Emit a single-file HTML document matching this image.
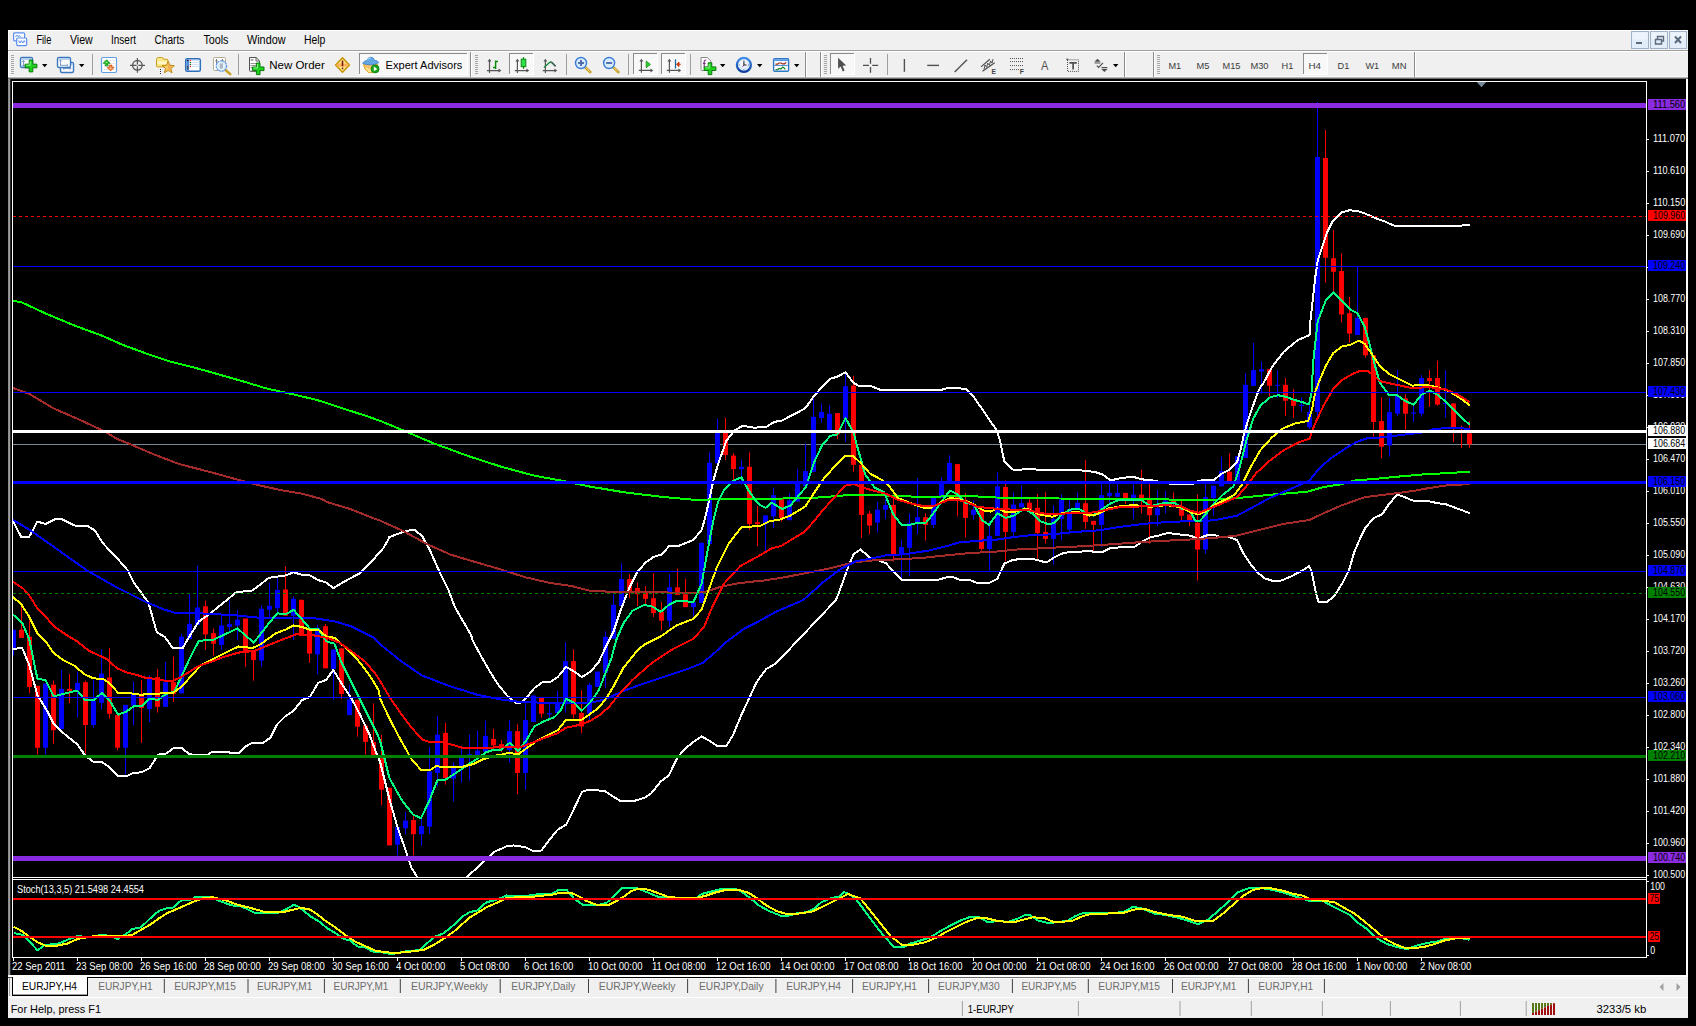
<!DOCTYPE html>
<html lang="en"><head><meta charset="utf-8"><title>EURJPY,H4</title>
<style>html,body{margin:0;padding:0;background:#000;overflow:hidden}svg{display:block}</style>
</head><body>
<svg width="1696" height="1026" viewBox="0 0 1696 1026" font-family='"Liberation Sans", sans-serif'>
<defs>
<clipPath id="cm"><rect x="13" y="82" width="1633" height="795"/></clipPath>
<clipPath id="cs"><rect x="13" y="880" width="1633" height="77"/></clipPath>
</defs>
<rect x="0" y="0" width="1696" height="1026" fill="#000"/>
<g clip-path="url(#cm)">
<rect x="13" y="444" width="1633" height="1" fill="#778899"/>
<rect x="13" y="629.7" width="1" height="25.7" fill="#0000ff"/>
<rect x="11" y="629.7" width="5" height="18.7" fill="#0000ff"/>
<rect x="21" y="605.1" width="1" height="32.8" fill="#ff0000"/>
<rect x="19" y="629.7" width="5" height="8.2" fill="#ff0000"/>
<rect x="29" y="620.4" width="1" height="72.5" fill="#ff0000"/>
<rect x="27" y="636.7" width="5" height="50.3" fill="#ff0000"/>
<rect x="37" y="685.8" width="1" height="68.9" fill="#ff0000"/>
<rect x="35" y="685.8" width="5" height="61.9" fill="#ff0000"/>
<rect x="45" y="683.5" width="1" height="71.2" fill="#0000ff"/>
<rect x="43" y="683.5" width="5" height="64.2" fill="#0000ff"/>
<rect x="53" y="680.6" width="1" height="63.1" fill="#ff0000"/>
<rect x="51" y="684.6" width="5" height="45.6" fill="#ff0000"/>
<rect x="61" y="669.8" width="1" height="59.2" fill="#0000ff"/>
<rect x="59" y="688.8" width="5" height="40.2" fill="#0000ff"/>
<rect x="69" y="674" width="1" height="29.3" fill="#ff0000"/>
<rect x="67" y="688.8" width="5" height="2.3" fill="#ff0000"/>
<rect x="77" y="671.7" width="1" height="45.6" fill="#0000ff"/>
<rect x="75" y="682.9" width="5" height="7.5" fill="#0000ff"/>
<rect x="85" y="680.6" width="1" height="73" fill="#ff0000"/>
<rect x="83" y="682.2" width="5" height="42.8" fill="#ff0000"/>
<rect x="93" y="679.9" width="1" height="47.9" fill="#0000ff"/>
<rect x="91" y="700.9" width="5" height="24.1" fill="#0000ff"/>
<rect x="101" y="649.6" width="1" height="59.5" fill="#0000ff"/>
<rect x="99" y="673.6" width="5" height="29.2" fill="#0000ff"/>
<rect x="109" y="648" width="1" height="70.5" fill="#ff0000"/>
<rect x="107" y="677.5" width="5" height="36.3" fill="#ff0000"/>
<rect x="117" y="715" width="1" height="35.1" fill="#ff0000"/>
<rect x="115" y="715" width="5" height="32.7" fill="#ff0000"/>
<rect x="125" y="704.9" width="1" height="69.7" fill="#0000ff"/>
<rect x="123" y="704.9" width="5" height="42.8" fill="#0000ff"/>
<rect x="133" y="681.5" width="1" height="43.5" fill="#0000ff"/>
<rect x="131" y="693.9" width="5" height="11.7" fill="#0000ff"/>
<rect x="141" y="679.9" width="1" height="63.1" fill="#ff0000"/>
<rect x="139" y="693.9" width="5" height="14.1" fill="#ff0000"/>
<rect x="149" y="675.2" width="1" height="46.8" fill="#0000ff"/>
<rect x="147" y="678.7" width="5" height="30.4" fill="#0000ff"/>
<rect x="157" y="668.9" width="1" height="43.7" fill="#ff0000"/>
<rect x="155" y="677.1" width="5" height="29.7" fill="#ff0000"/>
<rect x="165" y="661.9" width="1" height="44.9" fill="#0000ff"/>
<rect x="163" y="682.2" width="5" height="24.6" fill="#0000ff"/>
<rect x="173" y="656.6" width="1" height="45.5" fill="#ff0000"/>
<rect x="171" y="682.2" width="5" height="11.7" fill="#ff0000"/>
<rect x="181" y="633.9" width="1" height="59.4" fill="#0000ff"/>
<rect x="179" y="636.7" width="5" height="56.6" fill="#0000ff"/>
<rect x="189" y="593.5" width="1" height="45.6" fill="#0000ff"/>
<rect x="187" y="623.9" width="5" height="15.2" fill="#0000ff"/>
<rect x="197" y="565.4" width="1" height="59.6" fill="#0000ff"/>
<rect x="195" y="607.5" width="5" height="17.5" fill="#0000ff"/>
<rect x="205" y="600.5" width="1" height="49.1" fill="#ff0000"/>
<rect x="203" y="606.3" width="5" height="28.1" fill="#ff0000"/>
<rect x="213" y="628.5" width="1" height="26.9" fill="#ff0000"/>
<rect x="211" y="633.2" width="5" height="10.5" fill="#ff0000"/>
<rect x="221" y="614.5" width="1" height="35.1" fill="#0000ff"/>
<rect x="219" y="625.5" width="5" height="19.4" fill="#0000ff"/>
<rect x="229" y="600.5" width="1" height="31.5" fill="#0000ff"/>
<rect x="227" y="623.9" width="5" height="3" fill="#0000ff"/>
<rect x="237" y="609.8" width="1" height="30.4" fill="#0000ff"/>
<rect x="235" y="619.6" width="5" height="5.9" fill="#0000ff"/>
<rect x="245" y="618.5" width="1" height="48.6" fill="#ff0000"/>
<rect x="243" y="618.5" width="5" height="33.4" fill="#ff0000"/>
<rect x="253" y="651.9" width="1" height="28.8" fill="#ff0000"/>
<rect x="251" y="651.9" width="5" height="8.2" fill="#ff0000"/>
<rect x="261" y="605.1" width="1" height="62" fill="#0000ff"/>
<rect x="259" y="608.7" width="5" height="51.9" fill="#0000ff"/>
<rect x="269" y="582.9" width="1" height="35.1" fill="#0000ff"/>
<rect x="267" y="605.8" width="5" height="4" fill="#0000ff"/>
<rect x="277" y="577.8" width="1" height="35.5" fill="#0000ff"/>
<rect x="275" y="589.9" width="5" height="18.3" fill="#0000ff"/>
<rect x="285" y="566.5" width="1" height="49.2" fill="#ff0000"/>
<rect x="283" y="589.5" width="5" height="26.2" fill="#ff0000"/>
<rect x="293" y="596.3" width="1" height="43.9" fill="#0000ff"/>
<rect x="291" y="598.8" width="5" height="16.9" fill="#0000ff"/>
<rect x="301" y="599.8" width="1" height="34.6" fill="#ff0000"/>
<rect x="299" y="599.8" width="5" height="34.6" fill="#ff0000"/>
<rect x="309" y="629.7" width="1" height="33.2" fill="#ff0000"/>
<rect x="307" y="629.7" width="5" height="23.9" fill="#ff0000"/>
<rect x="317" y="624.6" width="1" height="50" fill="#0000ff"/>
<rect x="315" y="627.8" width="5" height="26.5" fill="#0000ff"/>
<rect x="325" y="623.9" width="1" height="44.4" fill="#ff0000"/>
<rect x="323" y="626.2" width="5" height="42.1" fill="#ff0000"/>
<rect x="333" y="649.6" width="1" height="50.3" fill="#0000ff"/>
<rect x="331" y="649.6" width="5" height="19.4" fill="#0000ff"/>
<rect x="341" y="648.4" width="1" height="50.3" fill="#ff0000"/>
<rect x="339" y="648.4" width="5" height="45.6" fill="#ff0000"/>
<rect x="349" y="684.7" width="1" height="30.4" fill="#0000ff"/>
<rect x="347" y="699.4" width="5" height="15.7" fill="#0000ff"/>
<rect x="357" y="699.8" width="1" height="36.9" fill="#ff0000"/>
<rect x="355" y="699.8" width="5" height="26.9" fill="#ff0000"/>
<rect x="365" y="725.5" width="1" height="29.2" fill="#ff0000"/>
<rect x="363" y="725.5" width="5" height="16.4" fill="#ff0000"/>
<rect x="373" y="703.3" width="1" height="53.8" fill="#ff0000"/>
<rect x="371" y="741.9" width="5" height="15.2" fill="#ff0000"/>
<rect x="381" y="734.7" width="1" height="70.2" fill="#ff0000"/>
<rect x="379" y="757" width="5" height="32.7" fill="#ff0000"/>
<rect x="389" y="787.8" width="1" height="57.6" fill="#ff0000"/>
<rect x="387" y="787.8" width="5" height="57.6" fill="#ff0000"/>
<rect x="397" y="827.1" width="1" height="28.1" fill="#0000ff"/>
<rect x="395" y="827.1" width="5" height="17.6" fill="#0000ff"/>
<rect x="405" y="811.9" width="1" height="22.3" fill="#0000ff"/>
<rect x="403" y="820.6" width="5" height="7.7" fill="#0000ff"/>
<rect x="413" y="815.4" width="1" height="39.8" fill="#ff0000"/>
<rect x="411" y="820.1" width="5" height="14.1" fill="#ff0000"/>
<rect x="421" y="818.9" width="1" height="26.9" fill="#0000ff"/>
<rect x="419" y="826" width="5" height="8.2" fill="#0000ff"/>
<rect x="429" y="747.1" width="1" height="86.6" fill="#0000ff"/>
<rect x="427" y="771.5" width="5" height="55.2" fill="#0000ff"/>
<rect x="437" y="716" width="1" height="70.2" fill="#0000ff"/>
<rect x="435" y="734.7" width="5" height="38.2" fill="#0000ff"/>
<rect x="445" y="723" width="1" height="61.6" fill="#ff0000"/>
<rect x="443" y="732.9" width="5" height="45.1" fill="#ff0000"/>
<rect x="453" y="762.1" width="1" height="39.3" fill="#0000ff"/>
<rect x="451" y="765.6" width="5" height="12.9" fill="#0000ff"/>
<rect x="461" y="748.1" width="1" height="34.6" fill="#0000ff"/>
<rect x="459" y="757" width="5" height="9.3" fill="#0000ff"/>
<rect x="469" y="734.7" width="1" height="45.7" fill="#0000ff"/>
<rect x="467" y="754.2" width="5" height="3.9" fill="#0000ff"/>
<rect x="477" y="730.8" width="1" height="25" fill="#0000ff"/>
<rect x="475" y="750.6" width="5" height="5.2" fill="#0000ff"/>
<rect x="485" y="720.7" width="1" height="31.1" fill="#0000ff"/>
<rect x="483" y="735.9" width="5" height="15.9" fill="#0000ff"/>
<rect x="493" y="728.9" width="1" height="18.7" fill="#ff0000"/>
<rect x="491" y="738.9" width="5" height="6.4" fill="#ff0000"/>
<rect x="501" y="740.1" width="1" height="12.2" fill="#ff0000"/>
<rect x="499" y="744.1" width="5" height="4.7" fill="#ff0000"/>
<rect x="509" y="720" width="1" height="42.8" fill="#0000ff"/>
<rect x="507" y="731.2" width="5" height="18.7" fill="#0000ff"/>
<rect x="517" y="724.2" width="1" height="70.2" fill="#ff0000"/>
<rect x="515" y="731.2" width="5" height="41.7" fill="#ff0000"/>
<rect x="525" y="703.2" width="1" height="86.5" fill="#0000ff"/>
<rect x="523" y="720" width="5" height="52.9" fill="#0000ff"/>
<rect x="533" y="695" width="1" height="26.9" fill="#0000ff"/>
<rect x="531" y="695.7" width="5" height="26.2" fill="#0000ff"/>
<rect x="541" y="698" width="1" height="19.7" fill="#ff0000"/>
<rect x="539" y="698" width="5" height="15.7" fill="#ff0000"/>
<rect x="549" y="702" width="1" height="16.4" fill="#0000ff"/>
<rect x="547" y="713.2" width="5" height="1.2" fill="#0000ff"/>
<rect x="557" y="691" width="1" height="22" fill="#0000ff"/>
<rect x="555" y="703.2" width="5" height="9.8" fill="#0000ff"/>
<rect x="565" y="642.2" width="1" height="70.3" fill="#0000ff"/>
<rect x="563" y="661.1" width="5" height="43.2" fill="#0000ff"/>
<rect x="573" y="649.2" width="1" height="69.2" fill="#ff0000"/>
<rect x="571" y="661.1" width="5" height="53.3" fill="#ff0000"/>
<rect x="581" y="690.3" width="1" height="42.6" fill="#ff0000"/>
<rect x="579" y="713" width="5" height="13.5" fill="#ff0000"/>
<rect x="589" y="682.6" width="1" height="38.1" fill="#0000ff"/>
<rect x="587" y="684.9" width="5" height="28.8" fill="#0000ff"/>
<rect x="597" y="671.6" width="1" height="15.2" fill="#0000ff"/>
<rect x="595" y="671.6" width="5" height="15.2" fill="#0000ff"/>
<rect x="605" y="631.2" width="1" height="56.8" fill="#0000ff"/>
<rect x="603" y="636.8" width="5" height="35.9" fill="#0000ff"/>
<rect x="613" y="594.3" width="1" height="44.4" fill="#0000ff"/>
<rect x="611" y="604.8" width="5" height="33.9" fill="#0000ff"/>
<rect x="621" y="563.2" width="1" height="42.8" fill="#0000ff"/>
<rect x="619" y="579.1" width="5" height="26.9" fill="#0000ff"/>
<rect x="629" y="574.4" width="1" height="23.4" fill="#ff0000"/>
<rect x="627" y="579.1" width="5" height="14" fill="#ff0000"/>
<rect x="637" y="582.6" width="1" height="23.4" fill="#ff0000"/>
<rect x="635" y="588" width="5" height="6.3" fill="#ff0000"/>
<rect x="645" y="586.1" width="1" height="18.7" fill="#ff0000"/>
<rect x="643" y="592.6" width="5" height="6.3" fill="#ff0000"/>
<rect x="653" y="573.2" width="1" height="43.8" fill="#ff0000"/>
<rect x="651" y="598.2" width="5" height="14.8" fill="#ff0000"/>
<rect x="661" y="602" width="1" height="28.5" fill="#ff0000"/>
<rect x="659" y="611.8" width="5" height="8.9" fill="#ff0000"/>
<rect x="669" y="574.4" width="1" height="52.6" fill="#0000ff"/>
<rect x="667" y="587.3" width="5" height="33.4" fill="#0000ff"/>
<rect x="677" y="568.5" width="1" height="26.5" fill="#ff0000"/>
<rect x="675" y="587.3" width="5" height="7.7" fill="#ff0000"/>
<rect x="685" y="579.1" width="1" height="28" fill="#ff0000"/>
<rect x="683" y="594.3" width="5" height="12.8" fill="#ff0000"/>
<rect x="693" y="602.5" width="1" height="14" fill="#0000ff"/>
<rect x="691" y="602.5" width="5" height="4.6" fill="#0000ff"/>
<rect x="701" y="542.8" width="1" height="60.1" fill="#0000ff"/>
<rect x="699" y="542.8" width="5" height="60.1" fill="#0000ff"/>
<rect x="709" y="452.3" width="1" height="91.7" fill="#0000ff"/>
<rect x="707" y="462.8" width="5" height="81.2" fill="#0000ff"/>
<rect x="717" y="418.8" width="1" height="44.5" fill="#0000ff"/>
<rect x="715" y="432.9" width="5" height="30.4" fill="#0000ff"/>
<rect x="725" y="417.7" width="1" height="42.1" fill="#ff0000"/>
<rect x="723" y="432.9" width="5" height="22.2" fill="#ff0000"/>
<rect x="733" y="453.2" width="1" height="27.6" fill="#ff0000"/>
<rect x="731" y="455.6" width="5" height="13.5" fill="#ff0000"/>
<rect x="741" y="459.8" width="1" height="24.5" fill="#0000ff"/>
<rect x="739" y="466.8" width="5" height="2.3" fill="#0000ff"/>
<rect x="749" y="452.3" width="1" height="77.6" fill="#ff0000"/>
<rect x="747" y="466.8" width="5" height="57.3" fill="#ff0000"/>
<rect x="757" y="506.1" width="1" height="40.2" fill="#ff0000"/>
<rect x="755" y="522.2" width="5" height="1.9" fill="#ff0000"/>
<rect x="765" y="515.4" width="1" height="36.8" fill="#0000ff"/>
<rect x="763" y="515.4" width="5" height="8.7" fill="#0000ff"/>
<rect x="773" y="487.5" width="1" height="40.5" fill="#0000ff"/>
<rect x="771" y="495.2" width="5" height="21.1" fill="#0000ff"/>
<rect x="781" y="499.2" width="1" height="22.2" fill="#ff0000"/>
<rect x="779" y="499.2" width="5" height="18.7" fill="#ff0000"/>
<rect x="789" y="492.9" width="1" height="27.3" fill="#0000ff"/>
<rect x="787" y="500.4" width="5" height="19.8" fill="#0000ff"/>
<rect x="797" y="468.8" width="1" height="32.7" fill="#0000ff"/>
<rect x="795" y="482.8" width="5" height="18.7" fill="#0000ff"/>
<rect x="805" y="443.7" width="1" height="42.6" fill="#0000ff"/>
<rect x="803" y="471.1" width="5" height="15.2" fill="#0000ff"/>
<rect x="813" y="398.6" width="1" height="73.2" fill="#0000ff"/>
<rect x="811" y="416.8" width="5" height="55" fill="#0000ff"/>
<rect x="821" y="403.3" width="1" height="19.4" fill="#0000ff"/>
<rect x="819" y="411.9" width="5" height="6.1" fill="#0000ff"/>
<rect x="829" y="404.9" width="1" height="25.3" fill="#0000ff"/>
<rect x="827" y="413.8" width="5" height="16.4" fill="#0000ff"/>
<rect x="837" y="413.1" width="1" height="26" fill="#ff0000"/>
<rect x="835" y="413.1" width="5" height="21.3" fill="#ff0000"/>
<rect x="845" y="374" width="1" height="67.9" fill="#0000ff"/>
<rect x="843" y="386.2" width="5" height="32.3" fill="#0000ff"/>
<rect x="853" y="375.9" width="1" height="95.9" fill="#ff0000"/>
<rect x="851" y="385.7" width="5" height="79.1" fill="#ff0000"/>
<rect x="861" y="464.8" width="1" height="73" fill="#ff0000"/>
<rect x="859" y="464.8" width="5" height="50.1" fill="#ff0000"/>
<rect x="869" y="510.9" width="1" height="23.4" fill="#ff0000"/>
<rect x="867" y="513.7" width="5" height="11.9" fill="#ff0000"/>
<rect x="877" y="501.5" width="1" height="31.1" fill="#0000ff"/>
<rect x="875" y="509.7" width="5" height="12.9" fill="#0000ff"/>
<rect x="885" y="499.2" width="1" height="19.9" fill="#0000ff"/>
<rect x="883" y="505" width="5" height="4.7" fill="#0000ff"/>
<rect x="893" y="498" width="1" height="63.6" fill="#ff0000"/>
<rect x="891" y="505" width="5" height="49.2" fill="#ff0000"/>
<rect x="901" y="539.6" width="1" height="39.1" fill="#0000ff"/>
<rect x="899" y="547.1" width="5" height="7.1" fill="#0000ff"/>
<rect x="909" y="513.2" width="1" height="63.2" fill="#0000ff"/>
<rect x="907" y="523.3" width="5" height="24.5" fill="#0000ff"/>
<rect x="917" y="478.1" width="1" height="56.2" fill="#0000ff"/>
<rect x="915" y="517.2" width="5" height="6.5" fill="#0000ff"/>
<rect x="925" y="513.2" width="1" height="27.4" fill="#ff0000"/>
<rect x="923" y="517.2" width="5" height="7.7" fill="#ff0000"/>
<rect x="933" y="498" width="1" height="30" fill="#0000ff"/>
<rect x="931" y="498" width="5" height="26.9" fill="#0000ff"/>
<rect x="941" y="477" width="1" height="21" fill="#0000ff"/>
<rect x="939" y="484" width="5" height="14" fill="#0000ff"/>
<rect x="949" y="455.2" width="1" height="28.8" fill="#0000ff"/>
<rect x="947" y="462.9" width="5" height="21.1" fill="#0000ff"/>
<rect x="957" y="464.1" width="1" height="52.2" fill="#ff0000"/>
<rect x="955" y="464.1" width="5" height="36.3" fill="#ff0000"/>
<rect x="965" y="493.3" width="1" height="44" fill="#ff0000"/>
<rect x="963" y="499.9" width="5" height="18" fill="#ff0000"/>
<rect x="973" y="500.4" width="1" height="19.1" fill="#0000ff"/>
<rect x="971" y="509.7" width="5" height="5.2" fill="#0000ff"/>
<rect x="981" y="509.7" width="1" height="40.9" fill="#ff0000"/>
<rect x="979" y="509.7" width="5" height="39.3" fill="#ff0000"/>
<rect x="989" y="521.4" width="1" height="49.1" fill="#0000ff"/>
<rect x="987" y="535.9" width="5" height="13.1" fill="#0000ff"/>
<rect x="997" y="472.3" width="1" height="63.6" fill="#0000ff"/>
<rect x="995" y="486.3" width="5" height="49.6" fill="#0000ff"/>
<rect x="1005" y="480.5" width="1" height="80.7" fill="#ff0000"/>
<rect x="1003" y="487" width="5" height="44.9" fill="#ff0000"/>
<rect x="1013" y="492.2" width="1" height="43.7" fill="#0000ff"/>
<rect x="1011" y="504.6" width="5" height="27.3" fill="#0000ff"/>
<rect x="1021" y="485.1" width="1" height="22.3" fill="#0000ff"/>
<rect x="1019" y="503.2" width="5" height="4.2" fill="#0000ff"/>
<rect x="1029" y="499.2" width="1" height="10.5" fill="#ff0000"/>
<rect x="1027" y="502.7" width="5" height="7" fill="#ff0000"/>
<rect x="1037" y="493.8" width="1" height="65" fill="#ff0000"/>
<rect x="1035" y="507.8" width="5" height="25.3" fill="#ff0000"/>
<rect x="1045" y="492.2" width="1" height="51.4" fill="#ff0000"/>
<rect x="1043" y="531.9" width="5" height="7" fill="#ff0000"/>
<rect x="1053" y="505" width="1" height="59.7" fill="#0000ff"/>
<rect x="1051" y="519.1" width="5" height="19.8" fill="#0000ff"/>
<rect x="1061" y="494.5" width="1" height="45.6" fill="#0000ff"/>
<rect x="1059" y="499.2" width="5" height="19.9" fill="#0000ff"/>
<rect x="1069" y="499.2" width="1" height="35.1" fill="#0000ff"/>
<rect x="1067" y="509" width="5" height="20.6" fill="#0000ff"/>
<rect x="1077" y="492.2" width="1" height="17.5" fill="#0000ff"/>
<rect x="1075" y="502.7" width="5" height="7" fill="#0000ff"/>
<rect x="1085" y="460.1" width="1" height="68.8" fill="#ff0000"/>
<rect x="1083" y="503.2" width="5" height="18.7" fill="#ff0000"/>
<rect x="1093" y="520.9" width="1" height="29.7" fill="#ff0000"/>
<rect x="1091" y="520.9" width="5" height="4" fill="#ff0000"/>
<rect x="1101" y="484" width="1" height="63.1" fill="#0000ff"/>
<rect x="1099" y="495.2" width="5" height="29.7" fill="#0000ff"/>
<rect x="1109" y="484" width="1" height="18.7" fill="#0000ff"/>
<rect x="1107" y="492.9" width="5" height="3.2" fill="#0000ff"/>
<rect x="1117" y="484" width="1" height="12.8" fill="#0000ff"/>
<rect x="1115" y="492.9" width="5" height="3.9" fill="#0000ff"/>
<rect x="1125" y="492.9" width="1" height="11" fill="#ff0000"/>
<rect x="1123" y="492.9" width="5" height="7.5" fill="#ff0000"/>
<rect x="1133" y="484.1" width="1" height="35.1" fill="#0000ff"/>
<rect x="1131" y="494.6" width="5" height="3.5" fill="#0000ff"/>
<rect x="1141" y="469.6" width="1" height="43.7" fill="#ff0000"/>
<rect x="1139" y="494.6" width="5" height="4.7" fill="#ff0000"/>
<rect x="1149" y="482.9" width="1" height="60.8" fill="#ff0000"/>
<rect x="1147" y="498.8" width="5" height="16.4" fill="#ff0000"/>
<rect x="1157" y="489.9" width="1" height="36.3" fill="#0000ff"/>
<rect x="1155" y="508.2" width="5" height="7" fill="#0000ff"/>
<rect x="1165" y="491.1" width="1" height="22.2" fill="#0000ff"/>
<rect x="1163" y="500.5" width="5" height="3" fill="#0000ff"/>
<rect x="1173" y="492.3" width="1" height="15.2" fill="#ff0000"/>
<rect x="1171" y="500.5" width="5" height="3.5" fill="#ff0000"/>
<rect x="1181" y="499.3" width="1" height="21.1" fill="#ff0000"/>
<rect x="1179" y="508.2" width="5" height="7.5" fill="#ff0000"/>
<rect x="1189" y="514.5" width="1" height="11.7" fill="#ff0000"/>
<rect x="1187" y="514.5" width="5" height="5.9" fill="#ff0000"/>
<rect x="1197" y="494.6" width="1" height="86.1" fill="#ff0000"/>
<rect x="1195" y="522.7" width="5" height="26.9" fill="#ff0000"/>
<rect x="1205" y="484.1" width="1" height="69.5" fill="#0000ff"/>
<rect x="1203" y="497" width="5" height="52.6" fill="#0000ff"/>
<rect x="1213" y="485.7" width="1" height="30" fill="#0000ff"/>
<rect x="1211" y="485.7" width="5" height="12.4" fill="#0000ff"/>
<rect x="1221" y="456.7" width="1" height="29.7" fill="#0000ff"/>
<rect x="1219" y="471.2" width="5" height="15.2" fill="#0000ff"/>
<rect x="1229" y="453" width="1" height="28.1" fill="#ff0000"/>
<rect x="1227" y="471.7" width="5" height="9.4" fill="#ff0000"/>
<rect x="1237" y="456" width="1" height="24.6" fill="#0000ff"/>
<rect x="1235" y="456" width="5" height="24.6" fill="#0000ff"/>
<rect x="1245" y="373" width="1" height="84.9" fill="#0000ff"/>
<rect x="1243" y="384.8" width="5" height="73.1" fill="#0000ff"/>
<rect x="1253" y="342.9" width="1" height="42.9" fill="#0000ff"/>
<rect x="1251" y="370.1" width="5" height="15.7" fill="#0000ff"/>
<rect x="1261" y="361.2" width="1" height="32.5" fill="#0000ff"/>
<rect x="1259" y="369.2" width="5" height="2.4" fill="#0000ff"/>
<rect x="1269" y="369.2" width="1" height="27.4" fill="#ff0000"/>
<rect x="1267" y="369.2" width="5" height="16.6" fill="#ff0000"/>
<rect x="1277" y="370.1" width="1" height="27.7" fill="#0000ff"/>
<rect x="1275" y="384.8" width="5" height="1" fill="#0000ff"/>
<rect x="1285" y="378" width="1" height="38.1" fill="#ff0000"/>
<rect x="1283" y="384.8" width="5" height="15.9" fill="#ff0000"/>
<rect x="1293" y="388.9" width="1" height="28.9" fill="#ff0000"/>
<rect x="1291" y="400.1" width="5" height="5.7" fill="#ff0000"/>
<rect x="1301" y="397.2" width="1" height="14.7" fill="#0000ff"/>
<rect x="1299" y="404.9" width="5" height="1" fill="#0000ff"/>
<rect x="1309" y="405.4" width="1" height="23.6" fill="#0000ff"/>
<rect x="1307" y="411.9" width="5" height="15.4" fill="#0000ff"/>
<rect x="1317" y="102" width="1" height="317.6" fill="#0000ff"/>
<rect x="1315" y="157" width="5" height="254.9" fill="#0000ff"/>
<rect x="1325" y="130" width="1" height="152.8" fill="#ff0000"/>
<rect x="1323" y="158" width="5" height="99.8" fill="#ff0000"/>
<rect x="1333" y="230.2" width="1" height="60.8" fill="#ff0000"/>
<rect x="1331" y="258.2" width="5" height="13.6" fill="#ff0000"/>
<rect x="1341" y="253.1" width="1" height="69.5" fill="#ff0000"/>
<rect x="1339" y="271.1" width="5" height="43.3" fill="#ff0000"/>
<rect x="1349" y="296.8" width="1" height="45.7" fill="#ff0000"/>
<rect x="1347" y="313.2" width="5" height="20.4" fill="#ff0000"/>
<rect x="1357" y="266.4" width="1" height="68.6" fill="#0000ff"/>
<rect x="1355" y="317.9" width="5" height="17.1" fill="#0000ff"/>
<rect x="1365" y="317.9" width="1" height="39.8" fill="#ff0000"/>
<rect x="1363" y="317.9" width="5" height="37.4" fill="#ff0000"/>
<rect x="1373" y="355.3" width="1" height="81.4" fill="#ff0000"/>
<rect x="1371" y="355.3" width="5" height="66.7" fill="#ff0000"/>
<rect x="1381" y="397.2" width="1" height="61.3" fill="#ff0000"/>
<rect x="1379" y="421.1" width="5" height="25.6" fill="#ff0000"/>
<rect x="1389" y="398.4" width="1" height="58.3" fill="#0000ff"/>
<rect x="1387" y="412.2" width="5" height="33.3" fill="#0000ff"/>
<rect x="1397" y="370.1" width="1" height="46" fill="#0000ff"/>
<rect x="1395" y="396" width="5" height="17.7" fill="#0000ff"/>
<rect x="1405" y="394.2" width="1" height="35.4" fill="#ff0000"/>
<rect x="1403" y="398.4" width="5" height="15.3" fill="#ff0000"/>
<rect x="1413" y="406" width="1" height="16" fill="#0000ff"/>
<rect x="1411" y="412.5" width="5" height="1.2" fill="#0000ff"/>
<rect x="1421" y="375.1" width="1" height="41.6" fill="#0000ff"/>
<rect x="1419" y="378" width="5" height="35.7" fill="#0000ff"/>
<rect x="1429" y="370.1" width="1" height="36.8" fill="#ff0000"/>
<rect x="1427" y="378" width="5" height="3.1" fill="#ff0000"/>
<rect x="1437" y="360.7" width="1" height="45" fill="#ff0000"/>
<rect x="1435" y="378" width="5" height="26.6" fill="#ff0000"/>
<rect x="1445" y="370.5" width="1" height="46.9" fill="#0000ff"/>
<rect x="1443" y="402.9" width="5" height="1.2" fill="#0000ff"/>
<rect x="1453" y="403.4" width="1" height="38.6" fill="#ff0000"/>
<rect x="1451" y="403.4" width="5" height="24.6" fill="#ff0000"/>
<rect x="1461" y="425.6" width="1" height="22.2" fill="#ff0000"/>
<rect x="1459" y="428" width="5" height="1.1" fill="#ff0000"/>
<rect x="1469" y="420.9" width="1" height="26.9" fill="#ff0000"/>
<rect x="1467" y="433.3" width="5" height="11" fill="#ff0000"/>
<polyline points="12.9,520.9 21.1,536.8 29.2,536.8 37.4,521.6 45.6,524 56.1,518.6 62,519.3 74.9,525.6 87.7,526.1 94.7,530.3 102.9,543.2 119.3,560.7 127.5,570.1 133.3,581.8 148.5,602.8 156.7,632 164.9,637.2 173.1,648.4 182.5,648.4 190.6,634.4 198.8,621.5 210.5,613.3 236.3,592.3 252.6,590.4 269,577.8 285.4,575.4 293.6,572.4 301.8,574.7 309.9,575.4 318.1,580.1 326.3,582.5 333.3,588.1 343.9,581.8 359.1,573.6 374.3,558.4 383.6,547.8 389.5,537.3 389.4,537 403.4,531.8 413.9,529.5 422.1,535.8 430.3,551 438.5,569.7 447.8,588.4 454.9,607.1 463,621.2 471.2,635.2 472.4,640 480.6,655.2 489.9,671.6 498.1,684.4 507.5,696.1 515.7,702.7 520.4,702.7 526.2,698 534.4,688 542.6,682.1 550.8,681.6 557.8,677 566,666.9 574.2,671.6 581.9,677 590.5,671.6 598.7,662.2 605.7,647 613.9,630.5 620.9,609.5 629.1,588.4 637.3,572 645.5,562.7 653.7,556.8 661.9,554.5 668.9,546.3 679.4,545.6 686.4,542.8 693.5,539.8 701.6,529.9 705.1,518.2 709.8,497.2 713.3,480.8 718,464.4 726.2,441.1 734.4,430.5 742.6,425.8 754.3,427.7 763.6,427 765.8,427.4 774,422 782.2,420.4 790.4,416.1 798.6,411.9 805.6,408 813.8,396.3 822,386.9 830.2,378.7 837.2,376.8 845.4,372.2 853.6,382.9 858.2,385.7 869.9,385.7 881.6,390.4 893.3,390.4 902.7,389.9 941.3,389.9 947.1,388.1 957.7,388.1 965.8,389.2 974,397.4 982.2,409.1 990.4,421.3 996.3,429.7 999.8,439.5 1004.4,461.8 1012.6,469.5 1022,469.5 1029,468.8 1045.4,470.4 1078.1,469.9 1086.3,471.1 1094.5,471.8 1102.7,474.6 1109.7,479.8 1117.9,479.3 1120,477.8 1134,477.1 1142.2,479.4 1150.4,480.1 1162.1,482.2 1173.8,484.3 1192.5,484.3 1198.4,480.6 1213.6,480.1 1221.8,473.6 1229.9,469.4 1237,462.3 1240.5,450.2 1244,433.8 1247.5,422.1 1252.2,408.1 1256.8,395.2 1260.4,387 1262.7,384.6 1272,367 1283.7,351.8 1297.8,340.1 1309.5,335 1310.6,319.1 1313,298 1315.3,277 1317.7,260.6 1322.3,246.5 1327,232.5 1332.9,220.8 1341.1,212.6 1349.2,210.3 1357.4,211 1365.6,213.8 1375,218 1384.3,221.3 1394.9,226 1461.5,226 1462.7,224.8 1469.7,224.8" fill="none" stroke="#ffffff" stroke-width="2" stroke-linejoin="round" stroke-linecap="butt" shape-rendering="crispEdges"/>
<polyline points="12.9,648.9 22.2,648 29.2,664.8 37.4,695.1 46.8,710.3 53.8,724.3 65.5,734.9 77.2,744.2 85.4,755.9 93.6,761.8 101.8,761.8 109.9,767.6 118.1,775.8 127.5,775.8 133.3,773 141.5,772.3 149.7,768.1 157.9,754.7 166.1,753.6 174.3,747.7 181.3,747.7 189.5,754.3 201.2,755.2 207,755.2 211.7,751.9 228.1,751.9 230.4,753.1 238.6,753.1 245.6,746.5 252.6,742.6 263.2,742.6 270.2,737.9 277.2,724.3 285.4,716.1 293.6,711 301.8,700.2 309.9,697 318.1,682.9 326.3,679.9 333.3,669.8 341.5,683.4 350.9,697.4 360.2,715 369.6,734.9 376.6,753.6 380,761.6 389.4,799.1 397.5,827.1 405.7,850.5 411.6,868.1 417.4,877.4 426.8,892.6 440.8,902 454.9,892.6 467.7,876.3 480.6,864.6 494.6,851.7 506.3,846.5 513.3,845.4 525,847 533.2,851 541.4,850.5 548.4,841.2 557.8,829.5 566,824.8 574.2,808.4 581.9,792 588.2,789.7 604.6,790.9 611.6,795.6 620.9,801.4 632.6,801.4 644.3,797.9 651.3,793.2 660.7,781.5 668.9,775.2 677.1,758.1 684.1,749.5 693.5,741.8 701.6,736.4 709.8,741.1 718,746.4 726.2,746.4 733.2,734.7 741.4,714.9 749.6,697.3 756.6,682.1 766,669.2 776,663.4 836,600 841.9,584.6 847.7,568.2 853.6,554.2 860.6,549.5 869.9,557.7 878.1,560 886.3,563.5 893.3,571.7 901.5,579.9 937.8,579.9 947.1,577.1 954.2,577.5 961.2,580.4 970.5,580.4 978.7,583.4 988.1,583.4 997.4,578.7 1004.4,563.5 1012.6,560 1022,558.8 1032.5,558.8 1043,561.6 1047.7,561.6 1053.6,557.7 1061.8,553.7 1069.9,551.8 1078.1,552.3 1086.3,550.6 1094.5,551.8 1102.7,551.8 1109.7,548.3 1117.9,547.6 1120,546.5 1135.2,546.5 1142.2,541.4 1150.4,537.2 1158.6,535.6 1166.8,533.2 1175,533.7 1182,534.9 1190.2,535.6 1198.4,539.1 1205.4,535.6 1213.6,534.9 1221.8,537.2 1229.9,537.2 1237,540.2 1244,554.3 1251,564.8 1258,573 1265,578.4 1272,580.7 1281.4,580.5 1290.8,576.5 1302.5,570.6 1309,566 1311.8,571.8 1315.3,590.5 1318.4,601.8 1327,601.8 1334,596.4 1342.2,583.5 1349.2,569.5 1353.9,553.1 1359.8,539.1 1365.6,527.4 1373.8,518 1382,514.5 1389,504 1397.2,494.6 1404.2,497 1412.4,500.5 1428.8,501.2 1438.1,503.3 1445.1,504 1454.5,507.5 1462.7,510.5 1469.7,513.3" fill="none" stroke="#ffffff" stroke-width="2" stroke-linejoin="round" stroke-linecap="butt" shape-rendering="crispEdges"/>
<polyline points="12.9,300.7 21.9,302.4 46.3,313.8 73.1,325 102.3,335.8 121.8,344.5 151.1,355.3 170.6,361.6 190.1,366.5 209.6,371.8 243.7,381.6 268,388.9 285.1,392.5 316.8,399.9 341.1,407.9 365.5,415.7 382.6,421.8 400.1,429.1 403.4,430.5 433.8,443.4 468.9,456.3 501.6,466.8 534.4,475.7 562.5,480.8 590.5,486.7 625.6,492.5 660.7,496.7 695.8,500 719.2,499.1 760,498.7 783.4,498.5 818.5,497.5 846.5,495.2 877,495.2 919.1,496.8 970.5,496.1 1005.6,498 1059.4,498.5 1120,499.3 1155.1,499.3 1190.2,499.8 1213.6,499.8 1237,498.1 1272,494.6 1307.1,491.8 1323.5,487.1 1342.2,484.1 1353.9,480.6 1377.3,478.7 1400.7,476.4 1424.1,474.3 1447.5,473.1 1469.7,471.7" fill="none" stroke="#00ff00" stroke-width="2" stroke-linejoin="round" stroke-linecap="butt" shape-rendering="crispEdges"/>
<polyline points="12.9,387.9 29.2,393.8 53.6,408.4 80.4,420.1 102.3,430.3 117,438.8 136.5,446.9 155.9,455.2 180.3,464.4 207.1,471.2 233.9,478.6 258.3,485.1 280.2,490 302.1,493.7 321.6,499 327.5,502.2 350.9,509.2 374.3,518.6 380,520.6 403.4,531.1 426.8,544 450.2,554.5 473.6,561.5 501.6,569.7 525,577.2 548.4,582.6 571.8,586.1 590.5,590.8 613.9,591.9 637.3,591.9 672.4,592.6 695.8,593.1 707.5,591.2 719.2,587.3 735.6,583.7 754.3,581.4 760,581.1 783.4,577.5 806.8,572.9 830.2,568.2 853.6,562.3 877,560 900.4,559.3 923.7,557.7 947.1,555.3 970.5,553 993.9,551.8 1017.3,549.5 1040.7,548.3 1064.1,547.1 1087.5,546 1110.9,544.3 1120,543.7 1143.4,541.9 1166.8,540.7 1190.2,539.5 1213.6,537.9 1237,535.6 1260.4,529.7 1283.7,523.9 1309.5,519.9 1323.5,513.3 1342.2,505.1 1365.6,497 1389,494.2 1412.4,491.1 1428.8,488.1 1447.5,485.3 1469.7,484.1" fill="none" stroke="#a52a2a" stroke-width="2" stroke-linejoin="round" stroke-linecap="butt" shape-rendering="crispEdges"/>
<polyline points="12.9,519.8 30.4,530.3 58.5,550.2 86.5,570.1 117,587.6 145,601.6 163.7,609.4 175.4,612.9 198.8,613.3 233.9,615.2 257.3,617.5 292.4,617.5 315.8,618.5 334.5,621.3 350.9,626.2 374.3,637.9 380,644.2 401.1,661.1 422.1,675.6 450.2,686.3 478.2,695 501.6,699.6 520.4,702 543.7,702.7 567.1,703.2 590.5,702.7 604.6,699.6 623.3,691 644.3,683.3 665.4,676.3 688.8,668.5 702.8,662.9 714.5,652.9 726.2,642.2 744.9,628.2 758.9,621.2 776,611.8 803.3,600 823.2,582.2 841.9,568.2 855.9,561.2 869.9,558.8 886.3,555.3 905,554.2 928.4,550.6 947.1,546 958.8,542.5 979.9,540.6 993.9,540.1 1008,537.8 1029,535.4 1052.4,534.3 1075.8,531.9 1099.2,530.3 1120,526.9 1143.4,523.9 1166.8,522 1190.2,521.1 1213.6,520.4 1237,515.7 1251,508.2 1269.7,498.1 1288.4,489.9 1309.5,480.6 1318.8,468.9 1330.5,458.4 1344.6,449 1356.3,442 1368,438 1384.3,437.3 1400.7,435 1421.8,432.6 1433.5,429.1 1447.5,428 1459.2,428 1469.7,429.1" fill="none" stroke="#0000ff" stroke-width="2" stroke-linejoin="round" stroke-linecap="butt" shape-rendering="crispEdges"/>
<polyline points="12.9,614.5 22.2,622.7 29.2,639.1 37.4,678.8 45.6,680 53.8,696.4 63.2,694 77.2,690.5 85.4,700.4 93.6,700.4 101.8,692.9 109.9,701.1 118.1,714.6 126.3,711.6 134.5,705.7 142.7,705.7 149.7,698.7 157.9,699.9 166.1,694 174.3,691.7 182.5,674.2 190.6,656.6 198.8,640.9 214,639.5 222.2,635.6 237.4,628.5 253.8,642.6 269,623.2 277.2,613.3 285.4,614.5 293.6,609.8 301.8,619.2 309.9,628.5 318.1,628.5 326.3,641.4 334.5,643.7 341.5,662.5 350.9,681.2 360.2,699.9 369.6,718.5 376.6,732.5 380,740.6 389.4,778 401.1,799.1 412.7,814.3 420.9,818.2 429.1,801.4 437.3,780.4 445.5,779.6 453.7,774.5 468.9,764 478.2,758.1 486,752.3 494.6,749.5 501.6,749.5 509.8,742.9 518,751.1 526.2,740.6 534.4,726.5 543.7,721.4 554.3,717.2 560.1,711.3 566,698.9 574.2,702.7 581.9,710.6 590.5,702 598.7,690.3 605.7,672.7 611.6,657.5 616.3,639.9 623.3,623.5 632.6,610.6 644.3,604.8 652.5,606.7 660.7,611.8 668.9,604.8 677.1,600.6 693.5,602 701.6,583.7 707.5,551 713.3,520.6 718,501.9 723.9,490.2 733.2,480.8 741.4,477.3 748.4,490.2 756.6,501.9 760,505 765.8,507.8 771.7,502.7 782.2,509 790.4,505.5 798.6,495.7 805.6,487.5 813.8,462.9 822,445.4 830.2,436 837.2,434.4 845.4,418 853.6,432.5 858.2,450.1 865.3,474.6 874.6,487.5 884,492.2 887.5,500.4 893.3,514.4 901.5,524.9 909.7,524.9 917.9,522.6 926.1,522.6 934.3,512 942.5,500.4 949.9,490.5 957.7,494.5 965.8,502.7 974,505 982.2,520.2 989.2,524.9 997.4,513.2 1005.6,517.9 1013.8,515.6 1024.3,508.5 1033.7,514.4 1040.7,521.4 1048.9,524.4 1054.7,522.6 1061.8,514.4 1069.9,509.7 1078.1,508.5 1086.3,513.2 1093.3,515.6 1101.5,509.7 1109.7,503.9 1117.9,500.4 1120,500.5 1131.7,499.8 1142.2,500.5 1150.4,506.3 1158.6,504 1166.8,502.8 1175,502.8 1182,508.7 1190.2,511 1194.9,520.4 1199.5,521.5 1206.5,513.3 1213.6,504 1222.9,494.6 1233.5,486.4 1239.3,468.9 1246.3,440.8 1253.3,418.6 1260.4,405.7 1269.7,397.5 1277.9,395.2 1286.1,396.8 1294.3,399.9 1302.5,402.2 1309,404.6 1311.8,391.7 1313,363.5 1317.7,321.4 1325.8,300.4 1333.3,292.2 1341.1,300.4 1350.4,309.7 1357.4,313.2 1364.4,326.1 1369.1,342.5 1373.8,361.2 1379.6,382.2 1389,395.2 1397.2,395.2 1405.4,401.1 1413.6,404.6 1421.8,394.5 1429.9,390.5 1438.1,395.2 1446.3,402.2 1454.5,410.4 1462.7,418.6 1469.7,424.9" fill="none" stroke="#00ff7f" stroke-width="2" stroke-linejoin="round" stroke-linecap="butt" shape-rendering="crispEdges"/>
<polyline points="12.9,597 21.1,604 29.2,616.8 37.4,633.2 45.6,641.4 53.8,653.1 63.2,660.1 74.9,666 84.2,674.2 93.6,678.4 102.9,678.8 109.9,683.5 118.1,692.9 131,693.3 140.4,694.7 152,694 163.7,693.3 173.1,692.9 182.5,685.8 191.8,675.3 201.2,664.8 215.2,657.8 229.2,650.8 238.6,646.5 252.6,648 259.6,644.9 276,633.2 285.4,629.7 293.6,625.5 301.8,626.9 309.9,629.7 318.1,629.7 326.3,636.3 334.5,637.9 346.2,648.4 357.9,660.1 369.6,675.3 378.9,690.5 380,698.5 390.5,720.7 401.1,740.6 411.6,759.3 420.9,769.8 430.3,769.8 436.1,766.3 445.5,767 459.5,767.5 473.6,764 482.9,759.3 494.6,755.8 501.6,754.6 509.8,752.7 518,754.6 527.4,747.6 539.1,739.4 550.8,733.6 557.8,730.1 566,720 574.2,720 582.3,719.5 590.5,713.7 598.7,707.8 606.9,697.3 613.9,685.6 623.3,668.1 637.3,650.5 644.3,644.6 660.7,636.4 675.9,625.8 693.5,618.8 701.6,609.5 707.5,593.1 716.8,567.4 728.5,544 741.4,527.1 760,526.1 769.4,521.4 779.9,519.5 790.4,515.6 805.6,506.2 813.8,493.3 823.2,479.3 832.5,468.8 840.7,460.6 845.4,455.9 853.6,456.4 860.6,462.9 869.9,473.5 881.6,479.8 887.5,484 898,498 909.7,502.7 923.7,507.8 930.8,507.8 942.5,501.5 950.6,498 958.8,499.2 970.5,502.7 984.6,510.9 990.4,511.6 997.4,508.5 1005.6,512 1013.8,512 1026.7,508.5 1040.7,514.9 1052.4,516.7 1061.8,513.2 1078.1,512 1089.8,515.6 1096.8,514.4 1108.5,508.5 1120,506.3 1134,505.1 1150.4,506.8 1166.8,505.1 1182,507.5 1190.2,512.2 1198.4,514.5 1206.5,511 1215.9,504 1225.3,499.8 1234.6,494.6 1241.6,485.3 1251,466.5 1260.4,450.2 1272,437.3 1283.7,428 1295.4,423.3 1308.3,420.9 1311.8,410.4 1315.3,391.7 1318.8,382.2 1325.8,365.8 1333.3,353 1342.2,346.4 1350.4,344.8 1358.6,340.6 1364.4,343.6 1370.3,351.8 1379.6,365.8 1389,374 1400.7,379.9 1412.4,385.7 1424.1,384.6 1435.8,386.9 1447.5,390.4 1459.2,397.5 1469.7,405.3" fill="none" stroke="#ffff00" stroke-width="2" stroke-linejoin="round" stroke-linecap="butt" shape-rendering="crispEdges"/>
<polyline points="12.9,581.8 23.4,588.8 30.4,597 37.4,608.7 46.8,618 53.8,626.2 65.5,634.4 77.2,641.4 88.9,650.8 98.2,655 107.6,659.6 117,668.3 126.3,672.3 135.7,674.6 145,677.7 154.4,678.8 163.7,680.5 173.1,680.5 180.1,677.7 189.5,671.8 198.8,666 210.5,662 224.6,656.6 238.6,652.6 255,650.8 269,644.9 280.7,640.2 295.9,634.4 311.1,634.9 327.5,637.9 339.2,642.6 350.9,650.8 364.9,661.3 376.6,675.3 380,680.9 390.5,698.5 401.1,713.7 411.6,727.7 422.1,739.4 429.1,741.8 443.2,742.2 461.9,747.6 482.9,748.1 501.6,747.1 520.4,747.1 532,742.9 543.7,738.2 557.8,733.1 566,727.7 574.2,726.1 581.9,724.2 590.5,720.7 599.9,714.9 609.2,706.7 618.6,695 632.6,679.8 651.3,663.4 672.4,649.4 693.5,638.7 704,627 712.2,607.1 723.9,583.7 740.2,566.2 760,555.3 771.7,548.3 781.1,546 792.7,538.9 804.4,531.9 813.8,521.4 823.2,509.7 834.9,496.8 845.4,485.6 853.6,484 862.9,487.5 874.6,491 886.3,493.8 898,499.9 909.7,503.2 923.7,506.2 935.4,505.5 947.1,500.4 954.2,499.6 965.8,501.5 977.5,506.9 993.9,508.5 1012.6,509.7 1026.7,509.7 1040.7,513.2 1054.7,514.4 1068.8,513.2 1087.5,513.2 1101.5,510.9 1117.9,507.4 1120,507.5 1143.4,506.3 1166.8,505.1 1180.8,506.3 1190.2,510.5 1198.4,512.9 1206.5,509.8 1220.6,504 1237,497 1246.3,486.4 1255.7,473.6 1269.7,460.7 1283.7,450.2 1297.8,442.7 1309.5,438.5 1314.2,425.6 1323.5,405.7 1332.9,389.4 1342.2,379.9 1353.9,373.3 1360.9,370.5 1366.8,370.5 1373.8,375.2 1379.6,381.1 1396,384.7 1412.4,388.2 1428.8,387 1445.1,389.4 1456.8,394 1469.7,402.2" fill="none" stroke="#ff0000" stroke-width="2" stroke-linejoin="round" stroke-linecap="butt" shape-rendering="crispEdges"/>
<rect x="13" y="103" width="1633" height="5" fill="#8a2be2"/>
<line x1="13" y1="216.5" x2="1646" y2="216.5" stroke="#ff0000" stroke-width="1" stroke-dasharray="3 3"/>
<rect x="13" y="266" width="1633" height="1" fill="#0000ff"/>
<rect x="13" y="392" width="1633" height="1" fill="#0000ff"/>
<rect x="13" y="430" width="1633" height="3" fill="#ffffff"/>
<rect x="13" y="481" width="1633" height="3" fill="#0000ff"/>
<rect x="13" y="571" width="1633" height="1" fill="#0000ff"/>
<line x1="13" y1="593.5" x2="1646" y2="593.5" stroke="#008000" stroke-width="1" stroke-dasharray="3 3"/>
<rect x="13" y="697" width="1633" height="1" fill="#0000ff"/>
<rect x="13" y="755" width="1633" height="3" fill="#008000"/>
<rect x="13" y="856" width="1633" height="5" fill="#8a2be2"/>
</g>
<path d="M1476.8 82 L1486.2 82 L1481.5 87.2 Z" fill="#778899"/>
<g clip-path="url(#cs)">
<polyline points="13.8,933 22.5,934.8 30,942.2 37.5,950.2 45,944.8 57.5,944 67.5,939.8 77.5,936 87.5,937.2 102.5,934.8 110,936 117.5,939 125,934.8 132.5,929 141.2,927.2 150,918.5 158.8,911 167.5,908 172.5,908 181.2,900.5 190,900.2 196.2,896.5 212.5,896.5 217.5,900.2 225,903 232.5,905.5 240,906 247.5,909.2 255,913 277.5,913 285,909.8 293.8,904.8 298.8,906.8 303.8,911 311.2,916.8 320,922.2 327.5,928.5 336.2,933.5 343.8,939 350,940.5 357.5,946.5 365,947.2 372.5,951.5 380,951.8 387.5,953.5 395,953.5 405,951.5 412.5,951 420,949.8 424,946 434,937.2 444,933 454,924.8 461.5,917.2 470.2,911.8 476.5,911 486.5,902.2 496.5,899.8 506.5,895.5 514,896.5 529,895.5 539,894 551.5,894 559,889.8 566.5,889.8 574,898.5 582.8,904.8 591.5,904.8 599,904.8 606.5,903 614,896 621.5,888.5 636.5,887.8 644,891 651.5,894 659,897.2 666.5,897.2 686.5,898 696.5,898 701.5,894 711.5,891.5 721.5,889 734,888.5 741.5,891.5 749,897.2 759,905.5 769,911 780.2,915.5 789,915.5 796.5,913.5 806.5,912.2 814,908.5 821.5,902.2 831.5,898 839,896.5 844,892.2 848,893.5 855.5,898.5 863,908.5 873,922.2 883,934.8 894.2,947.2 903,947.2 910.5,943.5 920.5,940.5 930.5,937.2 940.5,931 950.5,925.5 960.5,920.5 970.5,916.8 978,916.8 988,922.2 998,921 1008,921.8 1018,918.5 1025.5,914.8 1030.5,915.5 1038,920.5 1048,923 1058,922.2 1068,920.5 1075.5,916 1083,913 1095.5,913 1110.5,913 1123,912.2 1133,906.8 1140.5,908 1148,911 1155.5,914 1165.5,914.8 1175.5,917.2 1185.5,919.8 1198,924.2 1208,919.8 1218,911 1228,902.2 1238,892.2 1248,888.5 1260.5,887.8 1272,889.8 1282,892.2 1292,895.5 1302,898.5 1309.5,901 1322,900.5 1332,906 1342,911 1349.5,914.8 1357,922.2 1367,929 1377,938.5 1387,944 1397,947.2 1407,949 1417,945.5 1427,943 1437,941.5 1447,938.5 1459.5,938 1467,939 1469.5,939.8" fill="none" stroke="#00ff7f" stroke-width="2" stroke-linejoin="round" stroke-linecap="butt" shape-rendering="crispEdges"/>
<polyline points="13.8,926.8 22.5,931.5 30,937.2 37.5,942.2 45,945.5 57.5,945.5 67.5,943.5 77.5,939 87.5,937.2 95,936 110,936 125,936 132.5,934.8 141.2,929.8 150,924.8 158.8,918.5 167.5,913 175,909.8 185,905.5 195,901 202.5,898.5 212.5,897.2 220,899 227.5,901 237.5,904.8 247.5,907.2 257.5,909.8 265,912.2 282.5,912.2 292.5,909.8 300,908 308.8,909 316.2,913.5 325,920.5 335,927.2 345,934.8 355,941.5 365,946 375,950.5 385,952.2 395,953 405,952.2 415,951 424,949.8 434,944.8 444,938.5 454,931.5 461.5,924.8 470.2,917.2 476.5,913.5 486.5,907.2 496.5,903 506.5,898 519,897.2 529,897.2 539,896 551.5,894.8 559,893 571.5,893 579,896.5 586.5,901 596.5,904.8 609,904.8 616.5,901 624,896.5 631.5,891 639,888.5 649,889.8 659,893.5 669,897.2 684,898 696.5,898 706.5,895.5 716.5,892.2 726.5,889.8 739,889.8 749,893 756.5,898 766.5,905.5 776.5,911 786.5,914 799,913.5 811.5,911.8 821.5,907.2 831.5,902.2 841.5,897.2 848,894 860.5,898.5 870.5,911 880.5,923.5 890.5,936 901.8,944.8 913,944.8 925.5,942.2 935.5,938 945.5,932.2 955.5,927.2 965.5,922.2 975.5,918.5 985.5,918 995.5,920.5 1005.5,921.8 1015.5,921.8 1023,919.8 1033,917.2 1045.5,918.5 1053,921.8 1063,921.8 1073,920.5 1083,916 1093,913.5 1108,913.5 1123,913 1133,909.8 1143,908.5 1155.5,912.2 1168,914.8 1183,916.8 1195.5,921 1213,921 1223,913.5 1233,904.8 1243,896 1253,889.8 1263,888 1272,888.5 1282,890.5 1292,893.5 1302,895.5 1312,899.8 1322,900.5 1334.5,902.2 1344.5,908 1354.5,913.5 1364.5,921.5 1374.5,929.8 1384.5,938.5 1394.5,944 1404.5,947.8 1414.5,948 1424.5,946.8 1434.5,944 1444.5,940.5 1454.5,938.5 1469.5,938" fill="none" stroke="#ffff00" stroke-width="2" stroke-linejoin="round" stroke-linecap="butt" shape-rendering="crispEdges"/>
<rect x="13" y="898" width="1633" height="2" fill="#ff0000"/>
<rect x="13" y="936" width="1633" height="2" fill="#ff0000"/>
</g>
<text x="17" y="893" font-size="10" fill="#fff" text-anchor="start" textLength="127" lengthAdjust="spacingAndGlyphs">Stoch(13,3,5) 21.5498 24.4554</text>
<rect x="12" y="81" width="1635" height="1" fill="#ffffff"/>
<rect x="12" y="81" width="1" height="877" fill="#ffffff"/>
<rect x="1646" y="81" width="1" height="877" fill="#ffffff"/>
<rect x="12" y="877" width="1635" height="1" fill="#ffffff"/>
<rect x="12" y="879" width="1635" height="1" fill="#ffffff"/>
<rect x="12" y="957" width="1635" height="1" fill="#ffffff"/>
<rect x="1647" y="139" width="2" height="1" fill="#ffffff"/>
<text x="1653" y="142" font-size="10" fill="#fff" text-anchor="start" textLength="32.2" lengthAdjust="spacingAndGlyphs">111.070</text>
<rect x="1647" y="171" width="2" height="1" fill="#ffffff"/>
<text x="1653" y="174" font-size="10" fill="#fff" text-anchor="start" textLength="32.2" lengthAdjust="spacingAndGlyphs">110.610</text>
<rect x="1647" y="203" width="2" height="1" fill="#ffffff"/>
<text x="1653" y="206" font-size="10" fill="#fff" text-anchor="start" textLength="32.2" lengthAdjust="spacingAndGlyphs">110.150</text>
<rect x="1647" y="235" width="2" height="1" fill="#ffffff"/>
<text x="1653" y="238" font-size="10" fill="#fff" text-anchor="start" textLength="32.2" lengthAdjust="spacingAndGlyphs">109.690</text>
<rect x="1647" y="267" width="2" height="1" fill="#ffffff"/>
<text x="1653" y="270" font-size="10" fill="#fff" text-anchor="start" textLength="32.2" lengthAdjust="spacingAndGlyphs">109.230</text>
<rect x="1647" y="299" width="2" height="1" fill="#ffffff"/>
<text x="1653" y="302" font-size="10" fill="#fff" text-anchor="start" textLength="32.2" lengthAdjust="spacingAndGlyphs">108.770</text>
<rect x="1647" y="331" width="2" height="1" fill="#ffffff"/>
<text x="1653" y="334" font-size="10" fill="#fff" text-anchor="start" textLength="32.2" lengthAdjust="spacingAndGlyphs">108.310</text>
<rect x="1647" y="363" width="2" height="1" fill="#ffffff"/>
<text x="1653" y="366" font-size="10" fill="#fff" text-anchor="start" textLength="32.2" lengthAdjust="spacingAndGlyphs">107.850</text>
<rect x="1647" y="395" width="2" height="1" fill="#ffffff"/>
<text x="1653" y="398" font-size="10" fill="#fff" text-anchor="start" textLength="32.2" lengthAdjust="spacingAndGlyphs">107.390</text>
<rect x="1647" y="427" width="2" height="1" fill="#ffffff"/>
<text x="1653" y="430" font-size="10" fill="#fff" text-anchor="start" textLength="32.2" lengthAdjust="spacingAndGlyphs">106.930</text>
<rect x="1647" y="459" width="2" height="1" fill="#ffffff"/>
<text x="1653" y="462" font-size="10" fill="#fff" text-anchor="start" textLength="32.2" lengthAdjust="spacingAndGlyphs">106.470</text>
<rect x="1647" y="491" width="2" height="1" fill="#ffffff"/>
<text x="1653" y="494" font-size="10" fill="#fff" text-anchor="start" textLength="32.2" lengthAdjust="spacingAndGlyphs">106.010</text>
<rect x="1647" y="523" width="2" height="1" fill="#ffffff"/>
<text x="1653" y="526" font-size="10" fill="#fff" text-anchor="start" textLength="32.2" lengthAdjust="spacingAndGlyphs">105.550</text>
<rect x="1647" y="555" width="2" height="1" fill="#ffffff"/>
<text x="1653" y="558" font-size="10" fill="#fff" text-anchor="start" textLength="32.2" lengthAdjust="spacingAndGlyphs">105.090</text>
<rect x="1647" y="587" width="2" height="1" fill="#ffffff"/>
<text x="1653" y="590" font-size="10" fill="#fff" text-anchor="start" textLength="32.2" lengthAdjust="spacingAndGlyphs">104.630</text>
<rect x="1647" y="619" width="2" height="1" fill="#ffffff"/>
<text x="1653" y="622" font-size="10" fill="#fff" text-anchor="start" textLength="32.2" lengthAdjust="spacingAndGlyphs">104.170</text>
<rect x="1647" y="651" width="2" height="1" fill="#ffffff"/>
<text x="1653" y="654" font-size="10" fill="#fff" text-anchor="start" textLength="32.2" lengthAdjust="spacingAndGlyphs">103.720</text>
<rect x="1647" y="683" width="2" height="1" fill="#ffffff"/>
<text x="1653" y="686" font-size="10" fill="#fff" text-anchor="start" textLength="32.2" lengthAdjust="spacingAndGlyphs">103.260</text>
<rect x="1647" y="715" width="2" height="1" fill="#ffffff"/>
<text x="1653" y="718" font-size="10" fill="#fff" text-anchor="start" textLength="32.2" lengthAdjust="spacingAndGlyphs">102.800</text>
<rect x="1647" y="747" width="2" height="1" fill="#ffffff"/>
<text x="1653" y="750" font-size="10" fill="#fff" text-anchor="start" textLength="32.2" lengthAdjust="spacingAndGlyphs">102.340</text>
<rect x="1647" y="779" width="2" height="1" fill="#ffffff"/>
<text x="1653" y="782" font-size="10" fill="#fff" text-anchor="start" textLength="32.2" lengthAdjust="spacingAndGlyphs">101.880</text>
<rect x="1647" y="811" width="2" height="1" fill="#ffffff"/>
<text x="1653" y="814" font-size="10" fill="#fff" text-anchor="start" textLength="32.2" lengthAdjust="spacingAndGlyphs">101.420</text>
<rect x="1647" y="843" width="2" height="1" fill="#ffffff"/>
<text x="1653" y="846" font-size="10" fill="#fff" text-anchor="start" textLength="32.2" lengthAdjust="spacingAndGlyphs">100.960</text>
<rect x="1647" y="875" width="2" height="1" fill="#ffffff"/>
<text x="1653" y="878" font-size="10" fill="#fff" text-anchor="start" textLength="32.2" lengthAdjust="spacingAndGlyphs">100.500</text>
<rect x="1648" y="99" width="38" height="11" fill="#8a2be2"/>
<text x="1653" y="108" font-size="10" fill="#000" text-anchor="start" textLength="32.2" lengthAdjust="spacingAndGlyphs">111.560</text>
<rect x="1648" y="210" width="38" height="11" fill="#ff0000"/>
<text x="1653" y="219" font-size="10" fill="#000" text-anchor="start" textLength="32.2" lengthAdjust="spacingAndGlyphs">109.960</text>
<rect x="1648" y="260" width="38" height="11" fill="#0000ff"/>
<text x="1653" y="269" font-size="10" fill="#000" text-anchor="start" textLength="32.2" lengthAdjust="spacingAndGlyphs">109.240</text>
<rect x="1648" y="386" width="38" height="11" fill="#0000ff"/>
<text x="1653" y="395" font-size="10" fill="#000" text-anchor="start" textLength="32.2" lengthAdjust="spacingAndGlyphs">107.430</text>
<rect x="1648" y="425" width="38" height="11" fill="#ffffff"/>
<text x="1653" y="434" font-size="10" fill="#000" text-anchor="start" textLength="32.2" lengthAdjust="spacingAndGlyphs">106.880</text>
<rect x="1648" y="438" width="38" height="11" fill="#ffffff"/>
<text x="1653" y="447" font-size="10" fill="#000" text-anchor="start" textLength="32.2" lengthAdjust="spacingAndGlyphs">106.684</text>
<rect x="1648" y="476" width="38" height="11" fill="#0000ff"/>
<text x="1653" y="485" font-size="10" fill="#000" text-anchor="start" textLength="32.2" lengthAdjust="spacingAndGlyphs">106.150</text>
<rect x="1648" y="565" width="38" height="11" fill="#0000ff"/>
<text x="1653" y="574" font-size="10" fill="#000" text-anchor="start" textLength="32.2" lengthAdjust="spacingAndGlyphs">104.870</text>
<rect x="1648" y="587" width="38" height="11" fill="#008000"/>
<text x="1653" y="596" font-size="10" fill="#000" text-anchor="start" textLength="32.2" lengthAdjust="spacingAndGlyphs">104.550</text>
<rect x="1648" y="691" width="38" height="11" fill="#0000ff"/>
<text x="1653" y="700" font-size="10" fill="#000" text-anchor="start" textLength="32.2" lengthAdjust="spacingAndGlyphs">103.060</text>
<rect x="1648" y="750" width="38" height="11" fill="#008000"/>
<text x="1653" y="759" font-size="10" fill="#000" text-anchor="start" textLength="32.2" lengthAdjust="spacingAndGlyphs">102.210</text>
<rect x="1648" y="852" width="38" height="11" fill="#8a2be2"/>
<text x="1653" y="861" font-size="10" fill="#000" text-anchor="start" textLength="32.2" lengthAdjust="spacingAndGlyphs">100.740</text>
<rect x="1647" y="881" width="2" height="1" fill="#ffffff"/>
<text x="1650.3" y="890" font-size="10" fill="#fff" text-anchor="start" textLength="14.6" lengthAdjust="spacingAndGlyphs">100</text>
<rect x="1648" y="893" width="12" height="11" fill="#ff0000"/>
<text x="1649.5" y="902" font-size="10" fill="#000" text-anchor="start" textLength="9.6" lengthAdjust="spacingAndGlyphs">75</text>
<rect x="1648" y="931" width="12" height="11" fill="#ff0000"/>
<text x="1649.5" y="940" font-size="10" fill="#000" text-anchor="start" textLength="9.6" lengthAdjust="spacingAndGlyphs">25</text>
<rect x="1647" y="955" width="2" height="1" fill="#ffffff"/>
<text x="1650.3" y="954" font-size="10" fill="#fff" text-anchor="start" textLength="4.9" lengthAdjust="spacingAndGlyphs">0</text>
<rect x="13" y="958" width="1" height="3" fill="#ffffff"/>
<text x="12" y="970" font-size="10" fill="#fff" text-anchor="start" textLength="53.4" lengthAdjust="spacingAndGlyphs">22 Sep 2011</text>
<rect x="77" y="958" width="1" height="3" fill="#ffffff"/>
<text x="76" y="970" font-size="10" fill="#fff" text-anchor="start" textLength="56.8" lengthAdjust="spacingAndGlyphs">23 Sep 08:00</text>
<rect x="141" y="958" width="1" height="3" fill="#ffffff"/>
<text x="140" y="970" font-size="10" fill="#fff" text-anchor="start" textLength="56.8" lengthAdjust="spacingAndGlyphs">26 Sep 16:00</text>
<rect x="205" y="958" width="1" height="3" fill="#ffffff"/>
<text x="204" y="970" font-size="10" fill="#fff" text-anchor="start" textLength="56.8" lengthAdjust="spacingAndGlyphs">28 Sep 00:00</text>
<rect x="269" y="958" width="1" height="3" fill="#ffffff"/>
<text x="268" y="970" font-size="10" fill="#fff" text-anchor="start" textLength="56.8" lengthAdjust="spacingAndGlyphs">29 Sep 08:00</text>
<rect x="333" y="958" width="1" height="3" fill="#ffffff"/>
<text x="332" y="970" font-size="10" fill="#fff" text-anchor="start" textLength="56.8" lengthAdjust="spacingAndGlyphs">30 Sep 16:00</text>
<rect x="397" y="958" width="1" height="3" fill="#ffffff"/>
<text x="396" y="970" font-size="10" fill="#fff" text-anchor="start" textLength="49.3" lengthAdjust="spacingAndGlyphs">4 Oct 00:00</text>
<rect x="461" y="958" width="1" height="3" fill="#ffffff"/>
<text x="460" y="970" font-size="10" fill="#fff" text-anchor="start" textLength="49.3" lengthAdjust="spacingAndGlyphs">5 Oct 08:00</text>
<rect x="525" y="958" width="1" height="3" fill="#ffffff"/>
<text x="524" y="970" font-size="10" fill="#fff" text-anchor="start" textLength="49.3" lengthAdjust="spacingAndGlyphs">6 Oct 16:00</text>
<rect x="589" y="958" width="1" height="3" fill="#ffffff"/>
<text x="588" y="970" font-size="10" fill="#fff" text-anchor="start" textLength="54.6" lengthAdjust="spacingAndGlyphs">10 Oct 00:00</text>
<rect x="653" y="958" width="1" height="3" fill="#ffffff"/>
<text x="652" y="970" font-size="10" fill="#fff" text-anchor="start" textLength="53.9" lengthAdjust="spacingAndGlyphs">11 Oct 08:00</text>
<rect x="717" y="958" width="1" height="3" fill="#ffffff"/>
<text x="716" y="970" font-size="10" fill="#fff" text-anchor="start" textLength="54.6" lengthAdjust="spacingAndGlyphs">12 Oct 16:00</text>
<rect x="781" y="958" width="1" height="3" fill="#ffffff"/>
<text x="780" y="970" font-size="10" fill="#fff" text-anchor="start" textLength="54.6" lengthAdjust="spacingAndGlyphs">14 Oct 00:00</text>
<rect x="845" y="958" width="1" height="3" fill="#ffffff"/>
<text x="844" y="970" font-size="10" fill="#fff" text-anchor="start" textLength="54.6" lengthAdjust="spacingAndGlyphs">17 Oct 08:00</text>
<rect x="909" y="958" width="1" height="3" fill="#ffffff"/>
<text x="908" y="970" font-size="10" fill="#fff" text-anchor="start" textLength="54.6" lengthAdjust="spacingAndGlyphs">18 Oct 16:00</text>
<rect x="973" y="958" width="1" height="3" fill="#ffffff"/>
<text x="972" y="970" font-size="10" fill="#fff" text-anchor="start" textLength="54.6" lengthAdjust="spacingAndGlyphs">20 Oct 00:00</text>
<rect x="1037" y="958" width="1" height="3" fill="#ffffff"/>
<text x="1036" y="970" font-size="10" fill="#fff" text-anchor="start" textLength="54.6" lengthAdjust="spacingAndGlyphs">21 Oct 08:00</text>
<rect x="1101" y="958" width="1" height="3" fill="#ffffff"/>
<text x="1100" y="970" font-size="10" fill="#fff" text-anchor="start" textLength="54.6" lengthAdjust="spacingAndGlyphs">24 Oct 16:00</text>
<rect x="1165" y="958" width="1" height="3" fill="#ffffff"/>
<text x="1164" y="970" font-size="10" fill="#fff" text-anchor="start" textLength="54.6" lengthAdjust="spacingAndGlyphs">26 Oct 00:00</text>
<rect x="1229" y="958" width="1" height="3" fill="#ffffff"/>
<text x="1228" y="970" font-size="10" fill="#fff" text-anchor="start" textLength="54.6" lengthAdjust="spacingAndGlyphs">27 Oct 08:00</text>
<rect x="1293" y="958" width="1" height="3" fill="#ffffff"/>
<text x="1292" y="970" font-size="10" fill="#fff" text-anchor="start" textLength="54.6" lengthAdjust="spacingAndGlyphs">28 Oct 16:00</text>
<rect x="1357" y="958" width="1" height="3" fill="#ffffff"/>
<text x="1356" y="970" font-size="10" fill="#fff" text-anchor="start" textLength="51.4" lengthAdjust="spacingAndGlyphs">1 Nov 00:00</text>
<rect x="1421" y="958" width="1" height="3" fill="#ffffff"/>
<text x="1420" y="970" font-size="10" fill="#fff" text-anchor="start" textLength="51.4" lengthAdjust="spacingAndGlyphs">2 Nov 08:00</text>
<rect x="8" y="30" width="1680" height="47" fill="#f0f0f0"/>
<rect x="8" y="30" width="1680" height="1" fill="#ffffff"/>
<rect x="8" y="30" width="1" height="47" fill="#ffffff"/>
<rect x="8" y="50" width="1680" height="1" fill="#a0a0a0"/>
<rect x="8" y="51" width="1680" height="1" fill="#ffffff"/>
<rect x="8" y="76" width="1680" height="1" fill="#fafafa"/>
<rect x="8" y="77" width="1680" height="1" fill="#b4b4b4"/>
<rect x="8" y="78" width="1680" height="1" fill="#707070"/>
<rect x="8" y="79" width="1" height="896" fill="#8c8c8c"/>
<rect x="9" y="79" width="1" height="896" fill="#9c9c9c"/>
<rect x="10" y="79" width="1" height="896" fill="#2a2a2a"/>
<rect x="1686" y="79" width="2" height="898" fill="#ffffff"/>
<rect x="8" y="975" width="1680" height="2" fill="#ffffff"/>
<text x="36.4" y="43.9" font-size="12.2" fill="#000" text-anchor="start" textLength="14.9" lengthAdjust="spacingAndGlyphs">File</text>
<text x="70" y="43.9" font-size="12.2" fill="#000" text-anchor="start" textLength="22.7" lengthAdjust="spacingAndGlyphs">View</text>
<text x="111" y="43.9" font-size="12.2" fill="#000" text-anchor="start" textLength="25" lengthAdjust="spacingAndGlyphs">Insert</text>
<text x="154.6" y="43.9" font-size="12.2" fill="#000" text-anchor="start" textLength="29.7" lengthAdjust="spacingAndGlyphs">Charts</text>
<text x="203.4" y="43.9" font-size="12.2" fill="#000" text-anchor="start" textLength="25.1" lengthAdjust="spacingAndGlyphs">Tools</text>
<text x="247" y="43.9" font-size="12.2" fill="#000" text-anchor="start" textLength="38.5" lengthAdjust="spacingAndGlyphs">Window</text>
<text x="304" y="43.9" font-size="12.2" fill="#000" text-anchor="start" textLength="21.4" lengthAdjust="spacingAndGlyphs">Help</text>
<rect x="13.6" y="32.8" width="11" height="8" fill="#ffffff" stroke="#5a8ff0" stroke-width="1.2" rx="1"/>
<path d="M15.5 37l1.6-1.8 1.6 1.8M19 35.2l1.6 1.8" fill="none" stroke="#4a86e8" stroke-width="1"/>
<rect x="16.7" y="38" width="10" height="7.6" fill="#ffffff" stroke="#5a8ff0" stroke-width="1.2" rx="1"/>
<path d="M18.6 40.4l1.4 2.6 1.4-2.4 1.4 2.4 1.4-2.4 1 1.8" fill="none" stroke="#5a8ff0" stroke-width="1"/>
<rect x="1631.5" y="31.5" width="17" height="17" fill="#e3edf9" stroke="#9fb2c8" stroke-width="1"/>
<rect x="1632.5" y="32.5" width="15" height="7" fill="#edf3fb"/>
<rect x="1650.5" y="31.5" width="17" height="17" fill="#e3edf9" stroke="#9fb2c8" stroke-width="1"/>
<rect x="1651.5" y="32.5" width="15" height="7" fill="#edf3fb"/>
<rect x="1669.5" y="31.5" width="17" height="17" fill="#e3edf9" stroke="#9fb2c8" stroke-width="1"/>
<rect x="1670.5" y="32.5" width="15" height="7" fill="#edf3fb"/>
<rect x="1636" y="42" width="6" height="2" fill="#5a6a7c"/>
<path d="M1655.5 39.5h6v4.5h-6z M1657.5 39.5v-3h6v4.5h-2" fill="none" stroke="#5a6a7c" stroke-width="1.4"/>
<path d="M1675 36.5l6 6.5M1681 36.5l-6 6.5" stroke="#5a6a7c" stroke-width="2" fill="none"/>
<rect x="11" y="55" width="3" height="1" fill="#a6a6a6"/>
<rect x="11" y="57" width="3" height="1" fill="#a6a6a6"/>
<rect x="11" y="59" width="3" height="1" fill="#a6a6a6"/>
<rect x="11" y="61" width="3" height="1" fill="#a6a6a6"/>
<rect x="11" y="63" width="3" height="1" fill="#a6a6a6"/>
<rect x="11" y="65" width="3" height="1" fill="#a6a6a6"/>
<rect x="11" y="67" width="3" height="1" fill="#a6a6a6"/>
<rect x="11" y="69" width="3" height="1" fill="#a6a6a6"/>
<rect x="11" y="71" width="3" height="1" fill="#a6a6a6"/>
<rect x="11" y="73" width="3" height="1" fill="#a6a6a6"/>
<rect x="20.5" y="57.5" width="12" height="10" fill="#ffffff" stroke="#3a78c0" stroke-width="1.4" rx="1.5"/>
<rect x="21.2" y="58.2" width="10.6" height="1.6" fill="#a9c8ee"/>
<path d="M23.5 60.5v6M22 62l1.5-1.6 1.5 1.6M22 65l1.5 1.6 1.5-1.6" fill="none" stroke="#7f9fc4" stroke-width="1"/>
<path d="M29.2 60.1h3.6v4.1h4.1v3.6h-4.1v4.1h-3.6v-4.1h-4.1v-3.6h4.1z" fill="#1fd11f" stroke="#0a7a0a" stroke-width="1"/>
<path d="M30.2 61.3v4.1M26.3 65.2h4.1" fill="none" stroke="#8cf58c" stroke-width="1"/>
<path d="M42 64h5.4l-2.7 3.2z" fill="#000"/>
<rect x="60.5" y="62.5" width="13" height="10" fill="#ffffff" stroke="#3a78c0" stroke-width="1.4" rx="1.5"/>
<rect x="61.2" y="63.2" width="11.6" height="1.6" fill="#a9c8ee"/>
<path d="M63 68.5h8M64.3 67.2l-1.4 1.3 1.4 1.3M69.7 67.2l1.4 1.3-1.4 1.3" fill="none" stroke="#7f9fc4" stroke-width="1"/>
<rect x="57.5" y="57.5" width="13" height="10" fill="#ffffff" stroke="#3a78c0" stroke-width="1.4" rx="1.5"/>
<rect x="58.2" y="58.2" width="11.6" height="1.6" fill="#a9c8ee"/>
<path d="M60.5 60v6M59.2 61.3l1.3-1.4 1.3 1.4M60 65.3h8M66.7 64l1.4 1.3-1.4 1.3" fill="none" stroke="#7f9fc4" stroke-width="1"/>
<path d="M79 64h5.4l-2.7 3.2z" fill="#000"/>
<rect x="92" y="54" width="1" height="21" fill="#a0a0a0"/>
<rect x="101.5" y="57.5" width="15" height="15" fill="#ffffff" stroke="#62a0e2" stroke-width="1.2" rx="1.4"/>
<path d="M103.5 60.5h11M103.5 63.5h11M103.5 66.5h11M103.5 69.5h11" fill="none" stroke="#dcdcdc" stroke-width="1" stroke-dasharray="2 1"/>
<path d="M106.6 59.8l3.5 3.5h-2.1v2.5h-2.8v-2.5h-2.1z" fill="#2cc02c" stroke="#0a8a0a" stroke-width="0.7"/>
<path d="M106.6 61.6l1.2 1.4h-2.4z" fill="#8cf08c"/>
<path d="M110.6 70.9l3.5-3.5h-2.1v-2.3h-2.8v2.3h-2.1z" fill="#f58a4a" stroke="#d24a0a" stroke-width="0.7"/>
<path d="M110.6 69.2l1.2-1.4h-2.4z" fill="#fbd0a0"/>
<circle cx="137.4" cy="65.3" r="4.8" fill="none" stroke="#5a5a5a" stroke-width="1.4"/>
<path d="M137.4 58v14.7M130 65.3h15" fill="none" stroke="#5a5a5a" stroke-width="1.2"/>
<circle cx="137.4" cy="65.3" r="1.1" fill="#d8d8d8"/>
<path d="M156.5 59.5q0-2 2-2h3.2q1.6 0 2.2 1.8h3q1 0 1 1v5.7q0 .9-1 .9h-9.4q-1 0-1-1z" fill="#fbe88a" stroke="#c99a1a" stroke-width="1"/>
<path d="M157.3 61.5h9.8v2.5h-9.8z" fill="#fff7c8"/>
<rect x="160" y="69" width="1" height="1" fill="#303030"/>
<rect x="160" y="71" width="1" height="1" fill="#303030"/>
<rect x="160" y="73" width="1" height="1" fill="#303030"/>
<path d="M168.2 61.2l1.7 4.1 4.4.3-3.4 2.9 1.1 4.3-3.8-2.4-3.8 2.4 1.1-4.3-3.4-2.9 4.4-.3z" fill="#f7c860" stroke="#c08a14" stroke-width="1"/>
<path d="M168.2 64l.9 2.2 2.2.2-1.7 1.4.5 2.1-1.9-1.2z" fill="#f9a050"/>
<rect x="185.7" y="58.7" width="14.6" height="12.6" fill="#ffffff" stroke="#2e6fba" stroke-width="1.5" rx="1.6"/>
<rect x="186.5" y="59.5" width="2.6" height="11" fill="#4a8ad8"/>
<rect x="187.2" y="66" width="1.1" height="3.6" fill="#404040"/>
<path d="M191.5 60.5h8M191.5 62.5h8M191.5 64.5h8M191.5 66.5h8" fill="none" stroke="#c9dcf6" stroke-width="0.9"/>
<circle cx="190.4" cy="60.5" r="0.75" fill="#ff2020"/>
<circle cx="190.4" cy="62.5" r="0.75" fill="#206020"/>
<circle cx="190.4" cy="64.5" r="0.75" fill="#206020"/>
<circle cx="190.4" cy="66.5" r="0.75" fill="#ff2020"/>
<circle cx="187.7" cy="60.4" r="0.75" fill="#101010"/>
<rect x="213.5" y="57.5" width="12" height="13" fill="#ffffff" stroke="#b4aa92" stroke-width="1" rx="1"/>
<path d="M216.5 59v5M215.3 61h2.4M222.5 59v5M221.3 61h2.4" fill="none" stroke="#707070" stroke-width="0.9"/>
<path d="M225 69.5l5.2 4.6" fill="none" stroke="#c9a227" stroke-width="2.6" stroke-linecap="round"/>
<circle cx="221.4" cy="66" r="5.2" fill="#dcecfb" fill-opacity="0.85" stroke="#5a96e6" stroke-width="1.1" stroke-dasharray="2.2 0.6"/>
<rect x="219.8" y="63.5" width="3" height="5" fill="#aab4be"/>
<rect x="238" y="54" width="1" height="21" fill="#a0a0a0"/>
<path d="M249.5 57.5h6.6l3.4 3.4v9.6q0 .8-.8 .8h-8.4q-.8 0-.8-.8z" fill="#ffffff" stroke="#505050" stroke-width="1"/>
<path d="M256 57.6v3.4h3.4" fill="none" stroke="#505050" stroke-width="0.9"/>
<rect x="250.5" y="59.2" width="3" height="1.4" fill="#8c8c8c"/>
<path d="M250.5 63.5h6M250.5 65.5h6M250.5 67.5h3" fill="none" stroke="#8c8c8c" stroke-width="0.9"/>
<path d="M256.4 63h3.6v4h4v3.6h-4v4h-3.6v-4h-4v-3.6h4z" fill="#1fd11f" stroke="#0a7a0a" stroke-width="1"/>
<path d="M257.4 64.2v4M253.6 68h4" fill="none" stroke="#8cf58c" stroke-width="1"/>
<text x="269.2" y="68.8" font-size="10.4" fill="#000" text-anchor="start" textLength="55.6" lengthAdjust="spacingAndGlyphs">New Order</text>
<path d="M342.5 57.8l6.9 7.2-6.9 7.2-6.9-7.2z" fill="#fde58a" stroke="#c8960a" stroke-width="1.6" stroke-linejoin="round"/>
<path d="M337.6 63.4h9.8l1.5 1.6-1.5 1.6h-9.8l-1.5-1.6z" fill="#fdb25a"/>
<path d="M342.5 60.5v5.8" fill="none" stroke="#7a1010" stroke-width="1.5"/>
<rect x="341.8" y="67.6" width="1.5" height="1.6" fill="#7a1010"/>
<rect x="359" y="53" width="109" height="22" fill="#f8f8f8"/>
<rect x="359" y="53" width="109" height="1" fill="#8c8c8c"/>
<rect x="359" y="53" width="1" height="22" fill="#8c8c8c"/>
<rect x="359" y="74" width="109" height="1" fill="#ffffff"/>
<rect x="467" y="53" width="1" height="22" fill="#ffffff"/>
<path d="M363.6 64.2h14.2l-1.2 4.6-3.8 3.8h-4.2l-3.8-3.8z" fill="#fbbf6a" stroke="#d6a21e" stroke-width="0.9"/>
<path d="M364.8 67.5l3.8 4.6h4l1.6-1.6z" fill="#fbe88a"/>
<path d="M362.6 63.2q1.6-2.6 4.6-2.8.6-3.2 3.6-3.2t3.6 3q3.2.2 4.4 2.4-3 2.2-8.2 2.2t-8-1.6z" fill="#62a8e6" stroke="#3a80c8" stroke-width="0.8"/>
<path d="M367.6 59.4q1.4-1.4 3.2-1.4" fill="none" stroke="#bcdcf8" stroke-width="1"/>
<circle cx="375.1" cy="68.9" r="4" fill="#16a516" stroke="#0c7c0c" stroke-width="0.8"/>
<path d="M373.8 66.6l3.6 2.3-3.6 2.3z" fill="#ffffff"/>
<text x="385.6" y="68.8" font-size="10.4" fill="#000" text-anchor="start" textLength="76.8" lengthAdjust="spacingAndGlyphs">Expert Advisors</text>
<rect x="470" y="52" width="1" height="25" fill="#8c8c8c"/>
<rect x="471" y="52" width="1" height="25" fill="#ffffff"/>
<rect x="475" y="55" width="3" height="1" fill="#a6a6a6"/>
<rect x="475" y="57" width="3" height="1" fill="#a6a6a6"/>
<rect x="475" y="59" width="3" height="1" fill="#a6a6a6"/>
<rect x="475" y="61" width="3" height="1" fill="#a6a6a6"/>
<rect x="475" y="63" width="3" height="1" fill="#a6a6a6"/>
<rect x="475" y="65" width="3" height="1" fill="#a6a6a6"/>
<rect x="475" y="67" width="3" height="1" fill="#a6a6a6"/>
<rect x="475" y="69" width="3" height="1" fill="#a6a6a6"/>
<rect x="475" y="71" width="3" height="1" fill="#a6a6a6"/>
<rect x="475" y="73" width="3" height="1" fill="#a6a6a6"/>
<path d="M489.5 59.9V72.9M486.9 70.6H500.2" fill="none" stroke="#555555" stroke-width="1.2"/>
<path d="M489.5 58.8l-2 2.8h4z M501.3 70.6l-2.8 -2v4z" fill="#555555"/>
<path d="M495.6 60.5v8.4M495.6 61.4h2.4M493 67.6h2.6" fill="none" stroke="#0c8a0c" stroke-width="1.5"/>
<rect x="509" y="53" width="25" height="22" fill="#f8f8f8"/>
<rect x="509" y="53" width="25" height="1" fill="#8c8c8c"/>
<rect x="509" y="53" width="1" height="22" fill="#8c8c8c"/>
<rect x="509" y="74" width="25" height="1" fill="#ffffff"/>
<rect x="533" y="53" width="1" height="22" fill="#ffffff"/>
<path d="M517.4 59.9V72.9M514.8 70.6H528.1" fill="none" stroke="#555555" stroke-width="1.2"/>
<path d="M517.4 58.8l-2 2.8h4z M529.2 70.6l-2.8 -2v4z" fill="#555555"/>
<path d="M523.5 57.2v11.6" fill="none" stroke="#0c7c0c" stroke-width="1.3"/>
<rect x="521.2" y="59.2" width="4.6" height="7.4" fill="#2ee04e" stroke="#0c8a0c" stroke-width="1"/>
<path d="M545.4 59.9V72.9M542.8 70.6H556.1" fill="none" stroke="#555555" stroke-width="1.2"/>
<path d="M545.4 58.8l-2 2.8h4z M557.2 70.6l-2.8 -2v4z" fill="#555555"/>
<path d="M544 67.6q3.6-3.4 5.2-4.9t3 0l3.4 3.5" fill="none" stroke="#1a8a3a" stroke-width="1.4"/>
<path d="M551.4 62.3l4.2 3.9" fill="none" stroke="#4a5a6a" stroke-width="1.4"/>
<rect x="566" y="54" width="1" height="21" fill="#a0a0a0"/>
<path d="M584.6 66.8l5.6 5.2" fill="none" stroke="#c9a227" stroke-width="2.8" stroke-linecap="round"/>
<path d="M585.2 67.2l4.4 4.1" fill="none" stroke="#f3e3a0" stroke-width="0.8"/>
<circle cx="581" cy="63" r="5.5" fill="#d9ecfd" stroke="#3a7cd8" stroke-width="1.4"/>
<path d="M578 63h6" fill="none" stroke="#4866a8" stroke-width="1.8"/>
<path d="M581 60v6" fill="none" stroke="#4866a8" stroke-width="1.8"/>
<path d="M612.7 66.8l5.6 5.2" fill="none" stroke="#c9a227" stroke-width="2.8" stroke-linecap="round"/>
<path d="M613.3 67.2l4.4 4.1" fill="none" stroke="#f3e3a0" stroke-width="0.8"/>
<circle cx="609.1" cy="63" r="5.5" fill="#d9ecfd" stroke="#3a7cd8" stroke-width="1.4"/>
<path d="M606.1 63h6" fill="none" stroke="#4866a8" stroke-width="1.8"/>
<rect x="628" y="54" width="1" height="21" fill="#a0a0a0"/>
<rect x="633" y="53" width="25" height="22" fill="#f8f8f8"/>
<rect x="633" y="53" width="25" height="1" fill="#8c8c8c"/>
<rect x="633" y="53" width="1" height="22" fill="#8c8c8c"/>
<rect x="633" y="74" width="25" height="1" fill="#ffffff"/>
<rect x="657" y="53" width="1" height="22" fill="#ffffff"/>
<path d="M641.4 59.9V72.7M638.8 70.4H652.1" fill="none" stroke="#555555" stroke-width="1.2"/>
<path d="M641.4 58.8l-2 2.8h4z M653.2 70.4l-2.8 -2v4z" fill="#555555"/>
<path d="M646.2 61v6.8l4.2-3.4z" fill="#32d032" stroke="#0c8a0c" stroke-width="0.8"/>
<rect x="661" y="53" width="25" height="22" fill="#f8f8f8"/>
<rect x="661" y="53" width="25" height="1" fill="#8c8c8c"/>
<rect x="661" y="53" width="1" height="22" fill="#8c8c8c"/>
<rect x="661" y="74" width="25" height="1" fill="#ffffff"/>
<rect x="685" y="53" width="1" height="22" fill="#ffffff"/>
<path d="M669.4 59.9V72.7M666.8 70.4H680.1" fill="none" stroke="#555555" stroke-width="1.2"/>
<path d="M669.4 58.8l-2 2.8h4z M681.2 70.4l-2.8 -2v4z" fill="#555555"/>
<path d="M675.5 59.3v9.2" fill="none" stroke="#1a6aa8" stroke-width="1.3"/>
<path d="M676.6 64.3h4.2M676.6 64.3l2.4-2.2v4.4z" fill="#c83a0a" stroke="#c83a0a" stroke-width="1"/>
<rect x="690" y="54" width="1" height="21" fill="#a0a0a0"/>
<path d="M701 57.5h6.2l3.6 3.4v8.8q0 .8-.8 .8h-8.2q-.8 0-.8-.8z" fill="#ffffff" stroke="#8a8a8a" stroke-width="1"/>
<path d="M706.2 60.2q-1.8-.4-2 1.4v5.8M703 63.4h2.6" fill="none" stroke="#7a2a7a" stroke-width="1.1"/>
<path d="M708.2 62.8h3.6v4.1h4.1v3.6h-4.1v4.1h-3.6v-4.1h-4.1v-3.6h4.1z" fill="#1fd11f" stroke="#0a7a0a" stroke-width="1"/>
<path d="M709.2 64v4.1M705.3 67.9h4.1" fill="none" stroke="#8cf58c" stroke-width="1"/>
<path d="M720 64h5.4l-2.7 3.2z" fill="#000"/>
<defs><linearGradient id="ckr" x1="0" y1="0" x2="0" y2="1"><stop offset="0" stop-color="#3f8eea"/><stop offset="1" stop-color="#0b3c9c"/></linearGradient><radialGradient id="ckf" cx="0.45" cy="0.4" r="0.7"><stop offset="0" stop-color="#ffffff"/><stop offset="1" stop-color="#c4dbf8"/></radialGradient></defs>
<circle cx="743.9" cy="64.9" r="7" fill="url(#ckf)" stroke="url(#ckr)" stroke-width="2.2"/>
<circle cx="743.9" cy="60.2" r="0.55" fill="#5a7ab0"/>
<circle cx="748.6" cy="64.9" r="0.55" fill="#5a7ab0"/>
<circle cx="743.9" cy="69.6" r="0.55" fill="#5a7ab0"/>
<circle cx="739.2" cy="64.9" r="0.55" fill="#5a7ab0"/>
<path d="M743.9 61.2v3.8h2.6" fill="none" stroke="#202020" stroke-width="1.1"/>
<path d="M743.9 65l-1.4 1.8" fill="none" stroke="#7a1a5a" stroke-width="0.8"/>
<path d="M757 64h5.4l-2.7 3.2z" fill="#000"/>
<rect x="773.6" y="58.7" width="15" height="12.6" fill="#ffffff" stroke="#2e78c8" stroke-width="1.4" rx="1.2"/>
<rect x="774.3" y="59.3" width="13.6" height="1.8" fill="#5a9ae6"/>
<path d="M774.4 65.4h13.4" fill="none" stroke="#2e78c8" stroke-width="0.9"/>
<path d="M775.5 64.2h2l1.6-1.2h2l1.4.8h2l1.8-1.4" fill="none" stroke="#a02a10" stroke-width="1.2"/>
<path d="M775.5 69.6h2l1.8-1.2 1.6.6 1.8-2 1.4 1 1.2 1.4" fill="none" stroke="#1a8a2a" stroke-width="1.2"/>
<path d="M794 64h5.4l-2.7 3.2z" fill="#000"/>
<rect x="805" y="52" width="1" height="25" fill="#8c8c8c"/>
<rect x="806" y="52" width="1" height="25" fill="#ffffff"/>
<rect x="820" y="52" width="1" height="25" fill="#8c8c8c"/>
<rect x="821" y="52" width="1" height="25" fill="#ffffff"/>
<rect x="824" y="55" width="3" height="1" fill="#a6a6a6"/>
<rect x="824" y="57" width="3" height="1" fill="#a6a6a6"/>
<rect x="824" y="59" width="3" height="1" fill="#a6a6a6"/>
<rect x="824" y="61" width="3" height="1" fill="#a6a6a6"/>
<rect x="824" y="63" width="3" height="1" fill="#a6a6a6"/>
<rect x="824" y="65" width="3" height="1" fill="#a6a6a6"/>
<rect x="824" y="67" width="3" height="1" fill="#a6a6a6"/>
<rect x="824" y="69" width="3" height="1" fill="#a6a6a6"/>
<rect x="824" y="71" width="3" height="1" fill="#a6a6a6"/>
<rect x="824" y="73" width="3" height="1" fill="#a6a6a6"/>
<rect x="830" y="53" width="25" height="22" fill="#f8f8f8"/>
<rect x="830" y="53" width="25" height="1" fill="#8c8c8c"/>
<rect x="830" y="53" width="1" height="22" fill="#8c8c8c"/>
<rect x="830" y="74" width="25" height="1" fill="#ffffff"/>
<rect x="854" y="53" width="1" height="22" fill="#ffffff"/>
<path d="M838.1 57.8v11l2.6-2.4 2 5 1.9-.8-2-4.9 3.6-.2z" fill="#505050"/>
<path d="M870.5 58v5.8M870.5 67v5.8M863 65.4h6M872.2 65.4h6" fill="none" stroke="#505050" stroke-width="1.3"/>
<rect x="887" y="54" width="1" height="21" fill="#a0a0a0"/>
<path d="M904.4 59v12.8" fill="none" stroke="#505050" stroke-width="1.4"/>
<path d="M927.2 65.4h11.8" fill="none" stroke="#505050" stroke-width="1.4"/>
<path d="M954.7 71.9L967 59.7" fill="none" stroke="#505050" stroke-width="1.4"/>
<path d="M981 66.9l8.8-7.6M982.5 71.2l12.2-8.5" fill="none" stroke="#505050" stroke-width="1.2"/>
<path d="M984 69.5l1-4.6 1.6 2.4 1.2-4.2 1.6 2.2 1.2-4.4 1.4 2.2 1-4" fill="none" stroke="#505050" stroke-width="1"/>
<text x="991.6" y="73.8" font-size="6.6" fill="#404040" text-anchor="start" textLength="4.4" lengthAdjust="spacingAndGlyphs" font-weight="bold">E</text>
<path d="M1010 58.5h13" fill="none" stroke="#505050" stroke-width="1" stroke-dasharray="1 1"/>
<path d="M1010 61.6h13" fill="none" stroke="#505050" stroke-width="1" stroke-dasharray="1 1"/>
<path d="M1010 65.6h13" fill="none" stroke="#505050" stroke-width="1" stroke-dasharray="1 1"/>
<path d="M1010 69.6h9.4" fill="none" stroke="#505050" stroke-width="1" stroke-dasharray="1 1"/>
<text x="1019.8" y="73.8" font-size="6.6" fill="#404040" text-anchor="start" textLength="4.2" lengthAdjust="spacingAndGlyphs" font-weight="bold">F</text>
<text x="1041" y="69.8" font-size="12" fill="#505050" text-anchor="start" textLength="7.4" lengthAdjust="spacingAndGlyphs">A</text>
<rect x="1067.5" y="59.8" width="11" height="11.6" fill="none" stroke="#505050" stroke-width="1" stroke-dasharray="1 1"/>
<rect x="1066.4" y="58.6" width="1.8" height="1.4" fill="#505050"/>
<path d="M1069.4 62.8h7.4M1073.1 62.8v6.8" fill="none" stroke="#505050" stroke-width="1.7"/>
<path d="M1097.5 58.8l3.2 3h-6.4z M1094.6 62.4h5.8v1.2h-5.8z" fill="#505050"/>
<path d="M1104.4 72l3.2-3h-6.4z M1101.5 67h5.8v1.2h-5.8z" fill="#505050"/>
<path d="M1096.8 65.6l1.8 1.8 4.4-4.6" fill="none" stroke="#505050" stroke-width="1.2"/>
<path d="M1113 64h5.4l-2.7 3.2z" fill="#000"/>
<rect x="1124" y="52" width="1" height="25" fill="#8c8c8c"/>
<rect x="1125" y="52" width="1" height="25" fill="#ffffff"/>
<rect x="1153" y="52" width="1" height="25" fill="#8c8c8c"/>
<rect x="1154" y="52" width="1" height="25" fill="#ffffff"/>
<rect x="1157" y="55" width="3" height="1" fill="#a6a6a6"/>
<rect x="1157" y="57" width="3" height="1" fill="#a6a6a6"/>
<rect x="1157" y="59" width="3" height="1" fill="#a6a6a6"/>
<rect x="1157" y="61" width="3" height="1" fill="#a6a6a6"/>
<rect x="1157" y="63" width="3" height="1" fill="#a6a6a6"/>
<rect x="1157" y="65" width="3" height="1" fill="#a6a6a6"/>
<rect x="1157" y="67" width="3" height="1" fill="#a6a6a6"/>
<rect x="1157" y="69" width="3" height="1" fill="#a6a6a6"/>
<rect x="1157" y="71" width="3" height="1" fill="#a6a6a6"/>
<rect x="1157" y="73" width="3" height="1" fill="#a6a6a6"/>
<rect x="1303" y="53" width="25" height="22" fill="#f8f8f8"/>
<rect x="1303" y="53" width="25" height="1" fill="#8c8c8c"/>
<rect x="1303" y="53" width="1" height="22" fill="#8c8c8c"/>
<rect x="1303" y="74" width="25" height="1" fill="#ffffff"/>
<rect x="1327" y="53" width="1" height="22" fill="#ffffff"/>
<text x="1168.4" y="68.7" font-size="9.5" fill="#3c3c3c" text-anchor="start" textLength="12.8" lengthAdjust="spacingAndGlyphs">M1</text>
<text x="1196.5" y="68.7" font-size="9.5" fill="#3c3c3c" text-anchor="start" textLength="12.9" lengthAdjust="spacingAndGlyphs">M5</text>
<text x="1222.5" y="68.7" font-size="9.5" fill="#3c3c3c" text-anchor="start" textLength="18" lengthAdjust="spacingAndGlyphs">M15</text>
<text x="1250.4" y="68.7" font-size="9.5" fill="#3c3c3c" text-anchor="start" textLength="18.1" lengthAdjust="spacingAndGlyphs">M30</text>
<text x="1281.6" y="68.7" font-size="9.5" fill="#3c3c3c" text-anchor="start" textLength="11.8" lengthAdjust="spacingAndGlyphs">H1</text>
<text x="1308.4" y="68.7" font-size="9.5" fill="#3c3c3c" text-anchor="start" textLength="12.6" lengthAdjust="spacingAndGlyphs">H4</text>
<text x="1337.5" y="68.7" font-size="9.5" fill="#3c3c3c" text-anchor="start" textLength="11.8" lengthAdjust="spacingAndGlyphs">D1</text>
<text x="1365.4" y="68.7" font-size="9.5" fill="#3c3c3c" text-anchor="start" textLength="13.8" lengthAdjust="spacingAndGlyphs">W1</text>
<text x="1391.8" y="68.7" font-size="9.5" fill="#3c3c3c" text-anchor="start" textLength="14.7" lengthAdjust="spacingAndGlyphs">MN</text>
<rect x="1414" y="52" width="1" height="25" fill="#8c8c8c"/>
<rect x="1415" y="52" width="1" height="25" fill="#ffffff"/>
<rect x="8" y="977" width="1680" height="20" fill="#f0f0f0"/>
<defs><linearGradient id="tl" x1="0" y1="0" x2="1" y2="0"><stop offset="0" stop-color="#000" stop-opacity="1"/><stop offset="0.5" stop-color="#000" stop-opacity="1"/><stop offset="1" stop-color="#000" stop-opacity="0"/></linearGradient></defs>
<rect x="88" y="977" width="1250" height="1" fill="url(#tl)"/>
<rect x="88" y="978" width="1598" height="1" fill="#fafafa"/>
<rect x="8" y="997" width="1680" height="1" fill="#ffffff"/>
<rect x="12" y="977" width="76" height="19" fill="#000000"/>
<rect x="13" y="977" width="74" height="17.6" fill="#ffffff"/>
<rect x="8" y="977" width="4" height="1" fill="#505050"/>
<rect x="9" y="978" width="1" height="18" fill="#a0a0a0"/>
<text x="21.9" y="989.6" font-size="10.3" fill="#000" text-anchor="start" textLength="55.2" lengthAdjust="spacingAndGlyphs">EURJPY,H4</text>
<text x="98.2" y="989.6" font-size="10.3" fill="#6d6d6d" text-anchor="start" textLength="54.5" lengthAdjust="spacingAndGlyphs">EURJPY,H1</text>
<rect x="163.8" y="979" width="1" height="14" fill="#404040"/>
<text x="174.2" y="989.6" font-size="10.3" fill="#6d6d6d" text-anchor="start" textLength="61.8" lengthAdjust="spacingAndGlyphs">EURJPY,M15</text>
<rect x="247.5" y="979" width="1" height="14" fill="#404040"/>
<text x="257" y="989.6" font-size="10.3" fill="#6d6d6d" text-anchor="start" textLength="55.4" lengthAdjust="spacingAndGlyphs">EURJPY,M1</text>
<rect x="323.9" y="979" width="1" height="14" fill="#404040"/>
<text x="333.5" y="989.6" font-size="10.3" fill="#6d6d6d" text-anchor="start" textLength="54.9" lengthAdjust="spacingAndGlyphs">EURJPY,M1</text>
<rect x="399.8" y="979" width="1" height="14" fill="#404040"/>
<text x="411" y="989.6" font-size="10.3" fill="#6d6d6d" text-anchor="start" textLength="76.8" lengthAdjust="spacingAndGlyphs">EURJPY,Weekly</text>
<rect x="499.7" y="979" width="1" height="14" fill="#404040"/>
<text x="511.3" y="989.6" font-size="10.3" fill="#6d6d6d" text-anchor="start" textLength="64" lengthAdjust="spacingAndGlyphs">EURJPY,Daily</text>
<rect x="588" y="979" width="1" height="14" fill="#404040"/>
<text x="598.8" y="989.6" font-size="10.3" fill="#6d6d6d" text-anchor="start" textLength="76.8" lengthAdjust="spacingAndGlyphs">EURJPY,Weekly</text>
<rect x="687.1" y="979" width="1" height="14" fill="#404040"/>
<text x="699" y="989.6" font-size="10.3" fill="#6d6d6d" text-anchor="start" textLength="64.5" lengthAdjust="spacingAndGlyphs">EURJPY,Daily</text>
<rect x="775.4" y="979" width="1" height="14" fill="#404040"/>
<text x="786.2" y="989.6" font-size="10.3" fill="#6d6d6d" text-anchor="start" textLength="54.8" lengthAdjust="spacingAndGlyphs">EURJPY,H4</text>
<rect x="852.1" y="979" width="1" height="14" fill="#404040"/>
<text x="862" y="989.6" font-size="10.3" fill="#6d6d6d" text-anchor="start" textLength="55" lengthAdjust="spacingAndGlyphs">EURJPY,H1</text>
<rect x="928.1" y="979" width="1" height="14" fill="#404040"/>
<text x="938" y="989.6" font-size="10.3" fill="#6d6d6d" text-anchor="start" textLength="61.6" lengthAdjust="spacingAndGlyphs">EURJPY,M30</text>
<rect x="1011.9" y="979" width="1" height="14" fill="#404040"/>
<text x="1021.4" y="989.6" font-size="10.3" fill="#6d6d6d" text-anchor="start" textLength="54.9" lengthAdjust="spacingAndGlyphs">EURJPY,M5</text>
<rect x="1087.8" y="979" width="1" height="14" fill="#404040"/>
<text x="1098.2" y="989.6" font-size="10.3" fill="#6d6d6d" text-anchor="start" textLength="61.8" lengthAdjust="spacingAndGlyphs">EURJPY,M15</text>
<rect x="1172" y="979" width="1" height="14" fill="#404040"/>
<text x="1181" y="989.6" font-size="10.3" fill="#6d6d6d" text-anchor="start" textLength="55.5" lengthAdjust="spacingAndGlyphs">EURJPY,M1</text>
<rect x="1247.9" y="979" width="1" height="14" fill="#404040"/>
<text x="1258.3" y="989.6" font-size="10.3" fill="#6d6d6d" text-anchor="start" textLength="54.9" lengthAdjust="spacingAndGlyphs">EURJPY,H1</text>
<rect x="1323.9" y="979" width="1" height="14" fill="#404040"/>
<path d="M1663.5 983l-4 4 4 4z M1676.5 983l4 4-4 4z" fill="#a0a0a0"/>
<rect x="8" y="998" width="1680" height="20" fill="#f0f0f0"/>
<text x="10.7" y="1013" font-size="11" fill="#000" text-anchor="start" textLength="90.3" lengthAdjust="spacingAndGlyphs">For Help, press F1</text>
<text x="967.8" y="1012.5" font-size="10.3" fill="#000" text-anchor="start" textLength="46.2" lengthAdjust="spacingAndGlyphs">1-EURJPY</text>
<rect x="961.9" y="1001" width="1" height="15" fill="#a0a0a0"/>
<rect x="1077.9" y="1001" width="1" height="15" fill="#a0a0a0"/>
<rect x="1179.5" y="1001" width="1" height="15" fill="#a0a0a0"/>
<rect x="1250.8" y="1001" width="1" height="15" fill="#a0a0a0"/>
<rect x="1321.9" y="1001" width="1" height="15" fill="#a0a0a0"/>
<rect x="1389.9" y="1001" width="1" height="15" fill="#a0a0a0"/>
<rect x="1459.9" y="1001" width="1" height="15" fill="#a0a0a0"/>
<rect x="1525.7" y="1001" width="1" height="15" fill="#a0a0a0"/>
<rect x="1532" y="1003" width="2" height="10" fill="#5a7a1a"/>
<rect x="1532" y="1013" width="2" height="2" fill="#a01010"/>
<rect x="1535" y="1003" width="2" height="8.6" fill="#5a7a1a"/>
<rect x="1535" y="1011.6" width="2" height="3.4" fill="#a01010"/>
<rect x="1538" y="1003" width="2" height="7.2" fill="#5a7a1a"/>
<rect x="1538" y="1010.2" width="2" height="4.8" fill="#a01010"/>
<rect x="1541" y="1003" width="2" height="5.8" fill="#5a7a1a"/>
<rect x="1541" y="1008.8" width="2" height="6.2" fill="#a01010"/>
<rect x="1544" y="1003" width="2" height="4.4" fill="#5a7a1a"/>
<rect x="1544" y="1007.4" width="2" height="7.6" fill="#a01010"/>
<rect x="1547" y="1003" width="2" height="3" fill="#5a7a1a"/>
<rect x="1547" y="1006" width="2" height="9" fill="#a01010"/>
<rect x="1550" y="1003" width="2" height="1.6" fill="#5a7a1a"/>
<rect x="1550" y="1004.6" width="2" height="10.4" fill="#a01010"/>
<rect x="1553" y="1003" width="2" height="0.2" fill="#5a7a1a"/>
<rect x="1553" y="1003.2" width="2" height="11.8" fill="#a01010"/>
<text x="1596.5" y="1012.8" font-size="10.6" fill="#000" text-anchor="start" textLength="49.8" lengthAdjust="spacingAndGlyphs">3233/5 kb</text>
</svg>
</body></html>
